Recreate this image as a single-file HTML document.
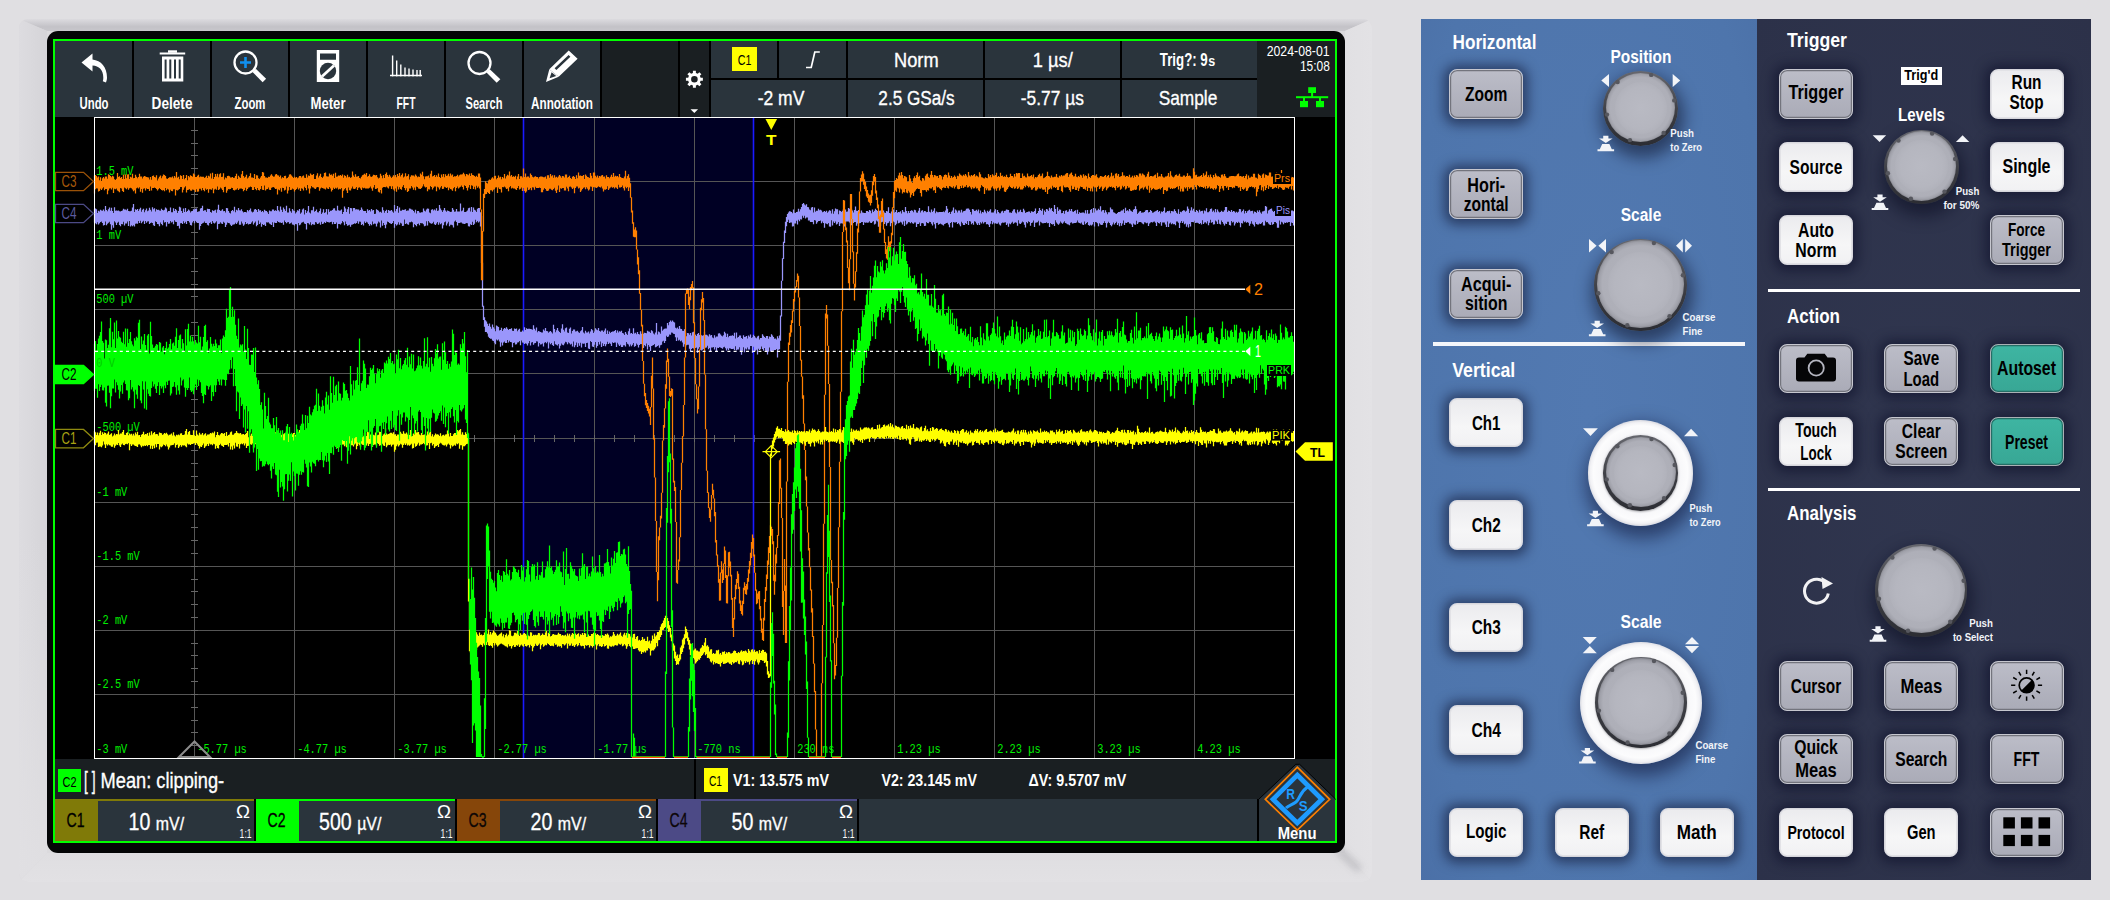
<!DOCTYPE html><html><head><meta charset="utf-8"><title>Oscilloscope</title><style>
html,body{margin:0;padding:0}
body{width:2110px;height:900px;overflow:hidden;background:#e0dfe2;position:relative;font-family:"Liberation Sans",sans-serif}
body>div{position:absolute}
svg{position:absolute;left:0;top:0}
.ls{font-family:"Liberation Sans",sans-serif}
.lm{font-family:"Liberation Mono",monospace}
#bezel{left:19px;top:19px;width:1353px;height:863px;border-radius:9px;background:#dbdadd}
#bz-top{left:19px;top:19px;width:1353px;height:12px;border-radius:9px 9px 0 0;background:linear-gradient(#dcdbdf,#c3c2c7 65%,#c8c7cc);clip-path:polygon(0 0,100% 0,calc(100% - 27px) 100%,28px 100%)}
#bz-left{left:19px;top:19px;width:28px;height:863px;border-radius:9px 0 0 9px;background:linear-gradient(to bottom,rgba(225,224,227,0) 60%,rgba(225,224,227,.85) 97%),linear-gradient(90deg,#dddce0,#d5d4d8);clip-path:polygon(0 0,100% 12px,100% calc(100% - 29px),0 100%)}
#bz-right{left:1345px;top:19px;width:27px;height:863px;border-radius:0 9px 9px 0;background:linear-gradient(90deg,#e1e0e3,#e3e2e5);clip-path:polygon(0 12px,100% 0,100% 100%,0 calc(100% - 29px))}
#bz-bot{left:19px;top:853px;width:1353px;height:29px;border-radius:0 0 9px 9px;background:linear-gradient(#dfdee1,#e2e1e4);clip-path:polygon(28px 0,calc(100% - 27px) 0,100% 100%,0 100%)}
#pblue{left:1421px;top:19px;width:336px;height:861px;background:radial-gradient(ellipse at 50% 45%,#5279b1,#4e75ac 80%,#4b70a7)}
#pnavy{left:1756.5px;top:19px;width:334.5px;height:861px;background:radial-gradient(ellipse at 50% 50%,#30364f,#2c3149)}
.b{width:72px;height:47.5px;border-radius:8px;border:1px solid #ccc;box-shadow:0 1px 12px 5px rgba(8,10,36,.5)}
.b.g{background:linear-gradient(#bcbdc8,#aaabb7);border-color:#c6c7cf;box-shadow:inset 0 0 0 1.2px #73747d,0 1px 12px 5px rgba(8,10,36,.5)}
.b.w{background:linear-gradient(#ebebee,#f6f6f7 60%,#f1f1f3);border-color:#d6d6dc;box-shadow:inset 0 0 0 1px #e2e2e6,0 1px 12px 5px rgba(8,10,36,.5)}
.b.t{background:linear-gradient(#3eb5a2,#38a795);border-color:#a9b0b4;box-shadow:inset 0 0 0 1.2px #246e66,0 1px 12px 5px rgba(8,10,36,.5)}
.knob{border-radius:50%;background:linear-gradient(#66676e,#3a3b41 60%,#2c2d33);box-shadow:2px 8px 16px 4px rgba(6,8,28,.5)}
.knob.kr{box-shadow:0 1px 2px rgba(0,0,0,.25)}
.kbody{border-radius:50%;background:radial-gradient(circle closest-side at 50% 50%,#b2b3bc 0,#aeafb8 88%,#a0a1aa 96%,#8d8e96 100%)}
.kin{border-radius:50%;background:radial-gradient(circle closest-side at 50% 50%,#b9bac3,#b5b6bf 80%,#b1b2bb)}
.ring{border-radius:50%;background:radial-gradient(circle closest-side at 50% 50%,#e6e6ea 0,#ebebef 72%,#f8f8fa 77%,#fcfcfd 90%,#f2f2f5 96%,#dedee4 100%);box-shadow:2px 8px 17px 4px rgba(6,8,40,.5)}
</style></head><body>
<div id="bezel"></div><div id="bz-top"></div><div id="bz-left"></div><div id="bz-right"></div><div id="bz-bot"></div>
<div style="left:1338px;top:846px;width:30px;height:7px;background:rgba(110,110,120,.28);filter:blur(3.5px);transform:rotate(43deg);transform-origin:0 50%"></div>
<div style="left:47px;top:31px;width:1298px;height:822px;background:#040506;border-radius:11px;"></div>
<div style="left:53px;top:39px;width:1284px;height:804px;background:#00ff00;"></div>
<div style="left:55px;top:41px;width:1280px;height:800px;background:#000;"></div>
<div style="left:55px;top:41px;width:1280px;height:76px;background:#1a1f22;"></div>
<div style="left:55px;top:41px;width:77px;height:76px;background:#2a343c;"></div>
<div style="left:132px;top:41px;width:2px;height:76px;background:#000;"></div>
<div style="left:134px;top:41px;width:76px;height:76px;background:#2a343c;"></div>
<div style="left:210px;top:41px;width:2px;height:76px;background:#000;"></div>
<div style="left:212px;top:41px;width:76px;height:76px;background:#2a343c;"></div>
<div style="left:288px;top:41px;width:2px;height:76px;background:#000;"></div>
<div style="left:290px;top:41px;width:76px;height:76px;background:#2a343c;"></div>
<div style="left:366px;top:41px;width:2px;height:76px;background:#000;"></div>
<div style="left:368px;top:41px;width:76px;height:76px;background:#2a343c;"></div>
<div style="left:444px;top:41px;width:2px;height:76px;background:#000;"></div>
<div style="left:446px;top:41px;width:76px;height:76px;background:#2a343c;"></div>
<div style="left:522px;top:41px;width:2px;height:76px;background:#000;"></div>
<div style="left:524px;top:41px;width:76px;height:76px;background:#2a343c;"></div>
<div style="left:600px;top:41px;width:2px;height:76px;background:#000;"></div>
<div style="left:678px;top:41px;width:2px;height:76px;background:#000;"></div>
<div style="left:709px;top:41px;width:2px;height:76px;background:#000;"></div>
<div style="left:711px;top:41px;width:66px;height:37px;background:#2a343c;"></div>
<div style="left:709px;top:41px;width:2px;height:76px;background:#000;"></div>
<div style="left:779px;top:41px;width:67px;height:37px;background:#2a343c;"></div>
<div style="left:777px;top:41px;width:2px;height:76px;background:#000;"></div>
<div style="left:848px;top:41px;width:135px;height:37px;background:#2a343c;"></div>
<div style="left:846px;top:41px;width:2px;height:76px;background:#000;"></div>
<div style="left:985px;top:41px;width:135px;height:37px;background:#2a343c;"></div>
<div style="left:983px;top:41px;width:2px;height:76px;background:#000;"></div>
<div style="left:1122px;top:41px;width:135px;height:37px;background:#2a343c;"></div>
<div style="left:1120px;top:41px;width:2px;height:76px;background:#000;"></div>
<div style="left:711px;top:78px;width:624px;height:2px;background:#000;"></div>
<div style="left:711px;top:80px;width:135px;height:37px;background:#2a343c;"></div>
<div style="left:848px;top:80px;width:135px;height:37px;background:#2a343c;"></div>
<div style="left:985px;top:80px;width:135px;height:37px;background:#2a343c;"></div>
<div style="left:1122px;top:80px;width:135px;height:37px;background:#2a343c;"></div>
<div style="left:1257px;top:41px;width:78px;height:76px;background:#1a1f22;"></div>
<div style="left:732px;top:47px;width:25px;height:24px;background:#ffff00;"></div>
<div style="left:55px;top:759px;width:1280px;height:40px;background:#1a1f22;"></div>
<div style="left:694px;top:759px;width:2px;height:40px;background:#000;"></div>
<div style="left:58px;top:769px;width:23px;height:23px;background:#00ff00;"></div>
<div style="left:703.5px;top:767.5px;width:24px;height:24px;background:#ffff00;"></div>
<div style="left:55px;top:799px;width:1280px;height:42px;background:#2a343c;"></div>
<div style="left:55px;top:799px;width:199px;height:2px;background:#807a08;"></div>
<div style="left:55px;top:799px;width:43px;height:42px;background:#807a08;"></div>
<div style="left:254px;top:799px;width:2px;height:42px;background:#000;"></div>
<div style="left:256px;top:799px;width:199px;height:2px;background:#00ff00;"></div>
<div style="left:256px;top:799px;width:43px;height:42px;background:#00ff00;"></div>
<div style="left:455px;top:799px;width:2px;height:42px;background:#000;"></div>
<div style="left:457px;top:799px;width:199px;height:2px;background:#86460a;"></div>
<div style="left:457px;top:799px;width:43px;height:42px;background:#86460a;"></div>
<div style="left:656px;top:799px;width:2px;height:42px;background:#000;"></div>
<div style="left:658px;top:799px;width:199px;height:2px;background:#4c4a86;"></div>
<div style="left:658px;top:799px;width:43px;height:42px;background:#4c4a86;"></div>
<div style="left:857px;top:799px;width:2px;height:42px;background:#000;"></div>
<div style="left:1257px;top:799px;width:2px;height:42px;background:#000;"></div>
<div id="pblue"></div><div id="pnavy"></div>
<div style="left:1768px;top:288.5px;width:312px;height:3.6px;background:#fff;"></div>
<div style="left:1768px;top:487.8px;width:312px;height:3.4px;background:#fff;"></div>
<div style="left:1432.6px;top:342px;width:312.4px;height:3.6px;background:#f4f6fa;"></div>
<div class="b g" style="left:1449.2px;top:69.3px"></div>
<div class="b g" style="left:1449.2px;top:169px"></div>
<div class="b g" style="left:1449.2px;top:269px"></div>
<div class="b w" style="left:1449.2px;top:397.5px"></div>
<div class="b w" style="left:1449.2px;top:500px"></div>
<div class="b w" style="left:1449.2px;top:602.5px"></div>
<div class="b w" style="left:1449.2px;top:705px"></div>
<div class="b w" style="left:1449.2px;top:807.5px"></div>
<div class="b w" style="left:1554.8px;top:807.5px"></div>
<div class="b w" style="left:1659.8px;top:807.5px"></div>
<div class="b g" style="left:1779px;top:69.3px"></div>
<div class="b w" style="left:1779px;top:142.3px"></div>
<div class="b w" style="left:1779px;top:215.3px"></div>
<div class="b w" style="left:1989.5px;top:69.3px"></div>
<div class="b w" style="left:1989.5px;top:142.3px"></div>
<div class="b g" style="left:1989.5px;top:215.3px"></div>
<div class="b g" style="left:1779px;top:343.5px"></div>
<div class="b g" style="left:1884.3px;top:343.5px"></div>
<div class="b t" style="left:1989.5px;top:343.5px"></div>
<div class="b w" style="left:1779px;top:416.5px"></div>
<div class="b g" style="left:1884.3px;top:416.5px"></div>
<div class="b t" style="left:1989.5px;top:416.5px"></div>
<div class="b g" style="left:1779px;top:661px"></div>
<div class="b g" style="left:1884.3px;top:661px"></div>
<div class="b g" style="left:1989.5px;top:661px"></div>
<div class="b g" style="left:1779px;top:734px"></div>
<div class="b g" style="left:1884.3px;top:734px"></div>
<div class="b g" style="left:1989.5px;top:734px"></div>
<div class="b w" style="left:1779px;top:807.5px"></div>
<div class="b w" style="left:1884.3px;top:807.5px"></div>
<div class="b g" style="left:1989.5px;top:807.5px"></div>
<div style="left:1900.7px;top:67.3px;width:41px;height:17.5px;background:#fff;"></div>
<div class="knob" style="left:1603.3px;top:71.0px;width:74.6px;height:74.6px"></div>
<div class="kbody" style="left:1605.9px;top:72.6px;width:69.4px;height:69.4px"></div>
<div class="kin" style="left:1614.5px;top:81.7px;width:52.2px;height:52.2px"></div>
<div class="knob" style="left:1594.3999999999999px;top:238.8px;width:92.4px;height:92.4px"></div>
<div class="kbody" style="left:1597.0px;top:240.4px;width:87.2px;height:87.2px"></div>
<div class="kin" style="left:1608.3px;top:252.2px;width:64.7px;height:64.7px"></div>
<div class="knob" style="left:1884.2px;top:129.60000000000002px;width:74.6px;height:74.6px"></div>
<div class="kbody" style="left:1886.8px;top:131.2px;width:69.4px;height:69.4px"></div>
<div class="kin" style="left:1895.4px;top:140.3px;width:52.2px;height:52.2px"></div>
<div class="knob" style="left:1875.1px;top:544.3px;width:92.4px;height:92.4px"></div>
<div class="kbody" style="left:1877.7px;top:545.9px;width:87.2px;height:87.2px"></div>
<div class="kin" style="left:1889.0px;top:557.7px;width:64.7px;height:64.7px"></div>
<div class="ring" style="left:1587.9px;top:420.2px;width:105.6px;height:105.6px"></div>
<div class="knob kr" style="left:1602.9px;top:435.2px;width:75.6px;height:75.6px"></div>
<div class="kbody" style="left:1605.5px;top:436.8px;width:70.4px;height:70.4px"></div>
<div class="kin" style="left:1614.2px;top:446.0px;width:52.9px;height:52.9px"></div>
<div class="ring" style="left:1579.8px;top:641.5px;width:122px;height:122px"></div>
<div class="knob kr" style="left:1595.0px;top:656.7px;width:91.6px;height:91.6px"></div>
<div class="kbody" style="left:1597.6px;top:658.3px;width:86.4px;height:86.4px"></div>
<div class="kin" style="left:1608.7px;top:669.9px;width:64.1px;height:64.1px"></div>
<svg width="2110" height="900" viewBox="0 0 2110 900">
<rect x="94" y="117" width="1201" height="642" fill="#000"/>
<rect x="523" y="118" width="231" height="640" fill="#000024"/>
<path d="M194.5 118V758M294.5 118V758M394.5 118V758M494.5 118V758M594.5 118V758M694.5 118V758M794.5 118V758M894.5 118V758M994.5 118V758M1094.5 118V758M1194.5 118V758M95 181.5H1294M95 245.5H1294M95 309.5H1294M95 373.5H1294M95 438.5H1294M95 502.5H1294M95 566.5H1294M95 630.5H1294M95 694.5H1294" stroke="#555" stroke-width="1" fill="none" shape-rendering="crispEdges"/>
<path d="M191 130.5h7M191 143.5h7M191 155.5h7M191 168.5h7M191 181.5h7M191 194.5h7M191 207.5h7M191 220.5h7M191 232.5h7M191 245.5h7M191 258.5h7M191 271.5h7M191 284.5h7M191 296.5h7M191 309.5h7M191 322.5h7M191 335.5h7M191 348.5h7M191 361.5h7M191 373.5h7M191 386.5h7M191 399.5h7M191 412.5h7M191 425.5h7M191 438.5h7M191 450.5h7M191 463.5h7M191 476.5h7M191 489.5h7M191 502.5h7M191 514.5h7M191 527.5h7M191 540.5h7M191 553.5h7M191 566.5h7M191 579.5h7M191 591.5h7M191 604.5h7M191 617.5h7M191 630.5h7M191 643.5h7M191 655.5h7M191 668.5h7M191 681.5h7M191 694.5h7M191 707.5h7M191 720.5h7M191 732.5h7M191 745.5h7M114.5 434.5v7M134.5 434.5v7M154.5 434.5v7M174.5 434.5v7M194.5 434.5v7M214.5 434.5v7M234.5 434.5v7M254.5 434.5v7M274.5 434.5v7M294.5 434.5v7M314.5 434.5v7M334.5 434.5v7M354.5 434.5v7M374.5 434.5v7M394.5 434.5v7M414.5 434.5v7M434.5 434.5v7M454.5 434.5v7M474.5 434.5v7M494.5 434.5v7M514.5 434.5v7M534.5 434.5v7M554.5 434.5v7M574.5 434.5v7M594.5 434.5v7M614.5 434.5v7M634.5 434.5v7M654.5 434.5v7M674.5 434.5v7M694.5 434.5v7M714.5 434.5v7M734.5 434.5v7M754.5 434.5v7M774.5 434.5v7M794.5 434.5v7M814.5 434.5v7M834.5 434.5v7M854.5 434.5v7M874.5 434.5v7M894.5 434.5v7M914.5 434.5v7M934.5 434.5v7M954.5 434.5v7M974.5 434.5v7M994.5 434.5v7M1014.5 434.5v7M1034.5 434.5v7M1054.5 434.5v7M1074.5 434.5v7M1094.5 434.5v7M1114.5 434.5v7M1134.5 434.5v7M1154.5 434.5v7M1174.5 434.5v7M1194.5 434.5v7M1214.5 434.5v7M1234.5 434.5v7M1254.5 434.5v7M1274.5 434.5v7" stroke="#666" stroke-width="1" fill="none" shape-rendering="crispEdges"/>
<path d="M523.5 118V758M753.5 118V758" stroke="#1a1aff" stroke-width="1.6" fill="none"/>
<text class="lm" transform="translate(96.3,175.0) scale(0.783,1)" font-size="13.2" fill="#00f000">1.5 mV</text>
<text class="lm" transform="translate(96.3,239.1) scale(0.783,1)" font-size="13.2" fill="#00f000">1 mV</text>
<text class="lm" transform="translate(96.3,303.2) scale(0.783,1)" font-size="13.2" fill="#00f000">500 µV</text>
<text class="lm" transform="translate(96.3,431.4) scale(0.783,1)" font-size="13.2" fill="#00f000">-500 µV</text>
<text class="lm" transform="translate(96.3,495.5) scale(0.783,1)" font-size="13.2" fill="#00f000">-1 mV</text>
<text class="lm" transform="translate(96.3,559.6) scale(0.783,1)" font-size="13.2" fill="#00f000">-1.5 mV</text>
<text class="lm" transform="translate(96.3,623.7) scale(0.783,1)" font-size="13.2" fill="#00f000">-2 mV</text>
<text class="lm" transform="translate(96.3,687.8) scale(0.783,1)" font-size="13.2" fill="#00f000">-2.5 mV</text>
<text class="lm" transform="translate(96.3,752.5) scale(0.783,1)" font-size="13.2" fill="#00f000">-3 mV</text>
<text class="lm" transform="translate(197.2,752.7) scale(0.783,1)" font-size="13.2" fill="#00f000">-5.77 µs</text>
<text class="lm" transform="translate(297.2,752.7) scale(0.783,1)" font-size="13.2" fill="#00f000">-4.77 µs</text>
<text class="lm" transform="translate(397.2,752.7) scale(0.783,1)" font-size="13.2" fill="#00f000">-3.77 µs</text>
<text class="lm" transform="translate(497.2,752.7) scale(0.783,1)" font-size="13.2" fill="#00f000">-2.77 µs</text>
<text class="lm" transform="translate(597.2,752.7) scale(0.783,1)" font-size="13.2" fill="#00f000">-1.77 µs</text>
<text class="lm" transform="translate(697.2,752.7) scale(0.783,1)" font-size="13.2" fill="#00f000">-770 ns</text>
<text class="lm" transform="translate(797.2,752.7) scale(0.783,1)" font-size="13.2" fill="#00f000">230 ns</text>
<text class="lm" transform="translate(897.2,752.7) scale(0.783,1)" font-size="13.2" fill="#00f000">1.23 µs</text>
<text class="lm" transform="translate(997.2,752.7) scale(0.783,1)" font-size="13.2" fill="#00f000">2.23 µs</text>
<text class="lm" transform="translate(1097.2,752.7) scale(0.783,1)" font-size="13.2" fill="#00f000">3.23 µs</text>
<text class="lm" transform="translate(1197.2,752.7) scale(0.783,1)" font-size="13.2" fill="#00f000">4.23 µs</text>
<path d="M94.5 209.2V222.4M95.5 208.6V223.2M96.5 209.3V224.2M97.5 212.9V222.3M98.5 210.7V224.4M99.5 211.4V223.2M100.5 209.7V222.1M101.5 210.5V221.5M102.5 210.7V223.0M103.5 209.5V225.6M104.5 211.3V224.9M105.5 206.1V221.5M106.5 210.0V225.3M107.5 211.3V223.7M108.5 209.3V222.7M109.5 207.4V221.8M110.5 210.8V224.2M111.5 207.8V229.7M112.5 210.9V225.3M113.5 212.9V227.8M114.5 207.2V221.3M115.5 210.7V222.4M116.5 210.5V224.9M117.5 210.8V222.7M118.5 210.6V221.8M119.5 211.2V224.9M120.5 211.6V226.3M121.5 211.0V224.0M122.5 210.5V224.3M123.5 208.7V221.7M124.5 209.6V225.5M125.5 209.6V223.5M126.5 210.2V223.5M127.5 208.8V221.4M128.5 211.1V226.1M129.5 211.3V221.1M130.5 211.2V226.4M131.5 210.7V225.3M132.5 207.6V226.2M133.5 204.1V225.3M134.5 212.0V226.5M135.5 209.2V223.7M136.5 210.1V223.5M137.5 209.1V223.8M138.5 210.9V220.9M139.5 209.3V223.0M140.5 207.8V220.7M141.5 211.7V223.3M142.5 209.8V221.7M143.5 208.7V220.8M144.5 212.3V223.9M145.5 210.2V220.9M146.5 208.4V222.8M147.5 211.3V221.6M148.5 210.4V221.2M149.5 207.7V224.0M150.5 209.8V222.9M151.5 211.6V222.4M152.5 207.3V222.9M153.5 209.3V225.3M154.5 208.2V226.0M155.5 211.4V221.3M156.5 209.2V222.0M157.5 210.0V224.1M158.5 209.7V224.2M159.5 210.5V226.3M160.5 210.7V222.5M161.5 208.7V223.9M162.5 210.1V225.2M163.5 210.5V220.2M164.5 209.8V222.6M165.5 207.5V222.1M166.5 208.5V226.4M167.5 212.2V222.0M168.5 211.1V223.8M169.5 211.1V223.5M170.5 207.4V221.0M171.5 212.3V222.4M172.5 212.2V221.8M173.5 208.2V224.2M174.5 211.1V220.3M175.5 209.1V221.7M176.5 210.2V222.1M177.5 213.1V225.9M178.5 210.9V225.7M179.5 206.8V228.4M180.5 207.5V223.3M181.5 211.0V222.9M182.5 213.0V223.9M183.5 208.4V221.2M184.5 212.0V223.2M185.5 208.0V221.8M186.5 212.0V224.0M187.5 211.1V221.0M188.5 209.5V221.0M189.5 210.4V222.5M190.5 212.4V225.0M191.5 211.2V225.4M192.5 210.9V222.4M193.5 209.3V221.1M194.5 209.5V223.3M195.5 208.8V220.7M196.5 208.5V222.2M197.5 212.1V223.1M198.5 211.6V222.9M199.5 211.2V229.8M200.5 208.5V226.0M201.5 207.9V224.1M202.5 205.7V223.2M203.5 211.1V222.8M204.5 210.2V221.4M205.5 210.2V223.1M206.5 211.9V222.9M207.5 208.8V224.8M208.5 209.1V225.4M209.5 209.0V222.9M210.5 212.0V222.2M211.5 212.7V223.9M212.5 210.2V221.0M213.5 211.1V222.7M214.5 210.6V223.6M215.5 209.7V222.5M216.5 212.8V221.3M217.5 209.5V229.3M218.5 204.7V223.9M219.5 209.9V223.7M220.5 210.9V222.2M221.5 210.4V223.6M222.5 209.2V224.1M223.5 211.3V221.7M224.5 210.9V222.7M225.5 212.6V226.9M226.5 207.9V224.8M227.5 208.3V222.5M228.5 210.9V223.1M229.5 212.7V223.3M230.5 213.4V224.7M231.5 211.0V226.1M232.5 210.1V224.8M233.5 211.2V224.6M234.5 206.7V224.2M235.5 212.3V222.7M236.5 209.8V223.9M237.5 210.6V222.6M238.5 208.0V220.7M239.5 210.2V224.8M240.5 210.6V224.8M241.5 209.2V221.6M242.5 211.3V223.4M243.5 212.4V225.7M244.5 211.9V224.4M245.5 212.0V221.9M246.5 212.5V224.0M247.5 209.9V223.3M248.5 211.2V224.5M249.5 210.1V224.1M250.5 208.5V224.0M251.5 211.5V222.4M252.5 212.6V221.2M253.5 211.7V224.4M254.5 209.4V222.8M255.5 209.1V221.6M256.5 210.0V226.2M257.5 212.0V225.1M258.5 208.9V220.6M259.5 210.5V223.9M260.5 210.2V222.5M261.5 212.0V226.7M262.5 211.1V223.9M263.5 212.3V225.1M264.5 209.8V224.4M265.5 210.7V226.1M266.5 211.0V222.2M267.5 212.3V222.5M268.5 213.9V222.2M269.5 210.6V223.4M270.5 211.2V224.2M271.5 211.2V224.9M272.5 209.5V222.3M273.5 209.6V226.9M274.5 211.1V222.6M275.5 210.2V223.1M276.5 211.0V222.9M277.5 206.1V221.1M278.5 210.2V222.1M279.5 211.5V222.4M280.5 206.5V222.5M281.5 209.7V222.9M282.5 212.0V222.4M283.5 207.4V224.8M284.5 209.2V220.6M285.5 211.1V222.0M286.5 205.7V223.3M287.5 212.5V222.2M288.5 212.6V221.9M289.5 208.2V223.7M290.5 211.3V223.3M291.5 212.8V222.5M292.5 208.9V224.4M293.5 210.4V224.7M294.5 211.1V225.5M295.5 213.6V224.0M296.5 212.2V224.3M297.5 210.2V230.8M298.5 210.7V223.1M299.5 209.0V225.2M300.5 213.7V224.4M301.5 212.5V222.8M302.5 209.6V222.3M303.5 208.6V221.8M304.5 214.5V223.5M305.5 209.9V224.0M306.5 212.9V229.4M307.5 211.3V222.9M308.5 206.1V223.3M309.5 212.6V224.5M310.5 213.5V222.2M311.5 210.3V225.2M312.5 210.3V224.0M313.5 206.7V224.4M314.5 211.7V224.8M315.5 210.9V222.1M316.5 209.5V222.4M317.5 212.3V224.0M318.5 212.6V223.4M319.5 211.0V222.5M320.5 208.5V224.8M321.5 213.9V221.7M322.5 212.5V224.0M323.5 209.2V223.6M324.5 213.1V221.9M325.5 212.2V223.1M326.5 209.1V221.4M327.5 214.5V222.1M328.5 209.3V222.3M329.5 211.9V222.6M330.5 210.7V222.1M331.5 210.7V221.8M332.5 209.9V224.3M333.5 208.5V222.1M334.5 208.2V223.9M335.5 210.6V224.0M336.5 210.8V222.6M337.5 205.7V228.5M338.5 210.3V224.0M339.5 210.8V223.9M340.5 210.6V224.5M341.5 209.5V223.2M342.5 214.1V220.9M343.5 212.1V222.2M344.5 206.4V225.2M345.5 208.5V221.4M346.5 211.9V223.9M347.5 209.2V225.8M348.5 207.1V225.3M349.5 213.8V224.8M350.5 208.1V226.7M351.5 208.2V224.8M352.5 211.2V224.4M353.5 208.1V224.1M354.5 208.1V223.2M355.5 209.6V223.8M356.5 209.2V222.9M357.5 209.4V221.2M358.5 209.6V223.8M359.5 210.8V221.4M360.5 210.0V221.8M361.5 207.4V224.9M362.5 209.6V224.1M363.5 210.9V225.4M364.5 211.1V221.5M365.5 211.1V222.9M366.5 213.0V221.8M367.5 209.2V222.5M368.5 210.8V224.1M369.5 209.9V225.7M370.5 211.4V224.1M371.5 208.9V225.2M372.5 210.4V221.6M373.5 210.1V224.2M374.5 213.9V223.6M375.5 213.8V223.8M376.5 209.2V226.4M377.5 210.1V223.4M378.5 210.8V221.5M379.5 212.3V222.6M380.5 211.7V227.6M381.5 212.7V220.6M382.5 207.3V225.8M383.5 210.3V222.9M384.5 212.8V225.0M385.5 211.0V228.2M386.5 209.7V224.4M387.5 212.9V221.6M388.5 210.1V222.1M389.5 210.8V223.0M390.5 210.7V223.4M391.5 209.9V224.0M392.5 211.6V223.1M393.5 212.8V220.9M394.5 204.9V227.7M395.5 211.2V224.1M396.5 209.0V225.5M397.5 206.1V224.6M398.5 212.7V222.3M399.5 207.4V224.8M400.5 210.7V222.7M401.5 210.8V223.5M402.5 209.8V226.0M403.5 210.0V225.8M404.5 209.8V219.4M405.5 209.3V223.9M406.5 211.0V223.3M407.5 210.6V224.3M408.5 210.4V224.8M409.5 208.4V222.2M410.5 208.7V222.2M411.5 209.5V221.6M412.5 209.8V222.3M413.5 211.1V227.3M414.5 212.5V223.9M415.5 209.7V225.0M416.5 213.6V226.3M417.5 211.0V224.0M418.5 210.9V223.6M419.5 212.6V225.3M420.5 212.7V223.0M421.5 212.3V223.3M422.5 212.3V223.3M423.5 208.4V224.2M424.5 210.8V226.2M425.5 211.5V225.8M426.5 209.6V221.3M427.5 208.6V225.5M428.5 208.8V220.9M429.5 212.4V222.4M430.5 213.3V223.2M431.5 209.8V223.8M432.5 209.2V223.3M433.5 210.6V221.7M434.5 209.4V224.2M435.5 210.5V225.1M436.5 208.2V223.6M437.5 211.0V222.0M438.5 210.6V224.7M439.5 205.0V222.4M440.5 208.6V224.3M441.5 210.2V223.3M442.5 212.1V228.6M443.5 210.3V225.2M444.5 207.9V222.3M445.5 210.6V221.6M446.5 211.8V225.4M447.5 210.4V223.6M448.5 210.9V221.8M449.5 211.6V226.2M450.5 211.9V224.8M451.5 211.8V224.8M452.5 207.9V225.2M453.5 209.7V227.5M454.5 211.8V221.6M455.5 211.5V220.6M456.5 208.9V222.1M457.5 211.5V225.4M458.5 211.6V223.0M459.5 211.4V223.0M460.5 203.6V222.4M461.5 211.3V222.4M462.5 210.6V223.6M463.5 207.7V223.8M464.5 212.0V223.9M465.5 211.9V223.5M466.5 211.4V223.1M467.5 210.5V223.2M468.5 208.2V226.3M469.5 207.7V226.5M470.5 211.5V224.2M471.5 206.9V225.1M472.5 211.9V221.8M473.5 207.6V225.0M474.5 209.8V223.7M475.5 210.6V219.8M476.5 212.0V222.2M477.5 208.7V220.9M478.5 208.1V222.4M479.5 207.9V221.5M480.5 212.2V226.5M481.5 215.9V263.1M482.5 262.8V306.8M483.5 305.7V319.9M484.5 317.2V326.7M485.5 320.3V332.0M486.5 321.5V332.0M487.5 323.8V333.4M488.5 326.0V336.7M489.5 323.6V337.9M490.5 326.7V338.8M491.5 328.8V338.8M492.5 324.6V340.5M493.5 327.3V340.9M494.5 328.8V342.8M495.5 331.2V344.3M496.5 325.6V339.6M497.5 326.2V340.6M498.5 327.1V339.5M499.5 330.5V341.4M500.5 329.9V346.7M501.5 327.7V342.5M502.5 331.0V345.6M503.5 329.2V342.6M504.5 328.0V341.4M505.5 328.7V343.1M506.5 327.2V343.1M507.5 328.7V340.1M508.5 330.0V342.5M509.5 329.1V340.8M510.5 329.1V342.1M511.5 328.2V342.2M512.5 330.8V347.3M513.5 330.9V343.1M514.5 328.4V342.6M515.5 329.1V344.4M516.5 328.5V344.2M517.5 331.3V342.4M518.5 329.8V342.3M519.5 328.7V340.9M520.5 331.7V345.2M521.5 331.7V340.4M522.5 330.6V342.6M523.5 331.5V342.8M524.5 327.3V344.0M525.5 330.1V343.3M526.5 328.3V343.7M527.5 328.9V345.6M528.5 328.8V343.2M529.5 328.8V341.1M530.5 329.1V345.4M531.5 329.2V342.5M532.5 329.8V341.9M533.5 325.2V344.8M534.5 328.8V343.3M535.5 330.5V343.0M536.5 327.6V341.2M537.5 332.3V341.6M538.5 331.0V346.4M539.5 331.5V343.0M540.5 331.9V344.4M541.5 332.6V344.3M542.5 332.4V343.6M543.5 329.6V346.5M544.5 330.8V342.7M545.5 328.1V342.0M546.5 331.1V343.3M547.5 331.3V341.7M548.5 332.8V348.5M549.5 331.7V342.4M550.5 331.0V344.3M551.5 332.3V342.9M552.5 333.6V345.1M553.5 324.8V346.1M554.5 329.0V341.2M555.5 332.3V344.3M556.5 330.3V344.8M557.5 327.9V345.5M558.5 330.8V344.0M559.5 331.9V348.4M560.5 332.9V345.8M561.5 328.4V343.5M562.5 324.2V344.7M563.5 329.8V345.3M564.5 331.5V343.6M565.5 328.3V341.7M566.5 327.6V342.2M567.5 332.4V344.2M568.5 333.0V342.2M569.5 328.7V343.2M570.5 327.5V344.6M571.5 333.5V343.7M572.5 330.9V346.5M573.5 329.5V341.6M574.5 329.4V347.2M575.5 331.6V345.2M576.5 331.2V342.5M577.5 330.8V346.9M578.5 332.2V343.3M579.5 333.1V345.7M580.5 331.2V342.8M581.5 330.2V347.5M582.5 327.0V343.5M583.5 332.5V343.8M584.5 333.5V343.4M585.5 330.8V347.1M586.5 332.6V343.1M587.5 332.4V342.8M588.5 331.5V348.5M589.5 333.6V349.0M590.5 331.5V340.9M591.5 329.0V341.9M592.5 330.3V346.6M593.5 332.9V347.0M594.5 331.5V344.8M595.5 328.2V342.0M596.5 329.6V347.8M597.5 330.3V345.9M598.5 328.0V342.0M599.5 331.0V344.6M600.5 331.8V341.6M601.5 330.4V347.0M602.5 330.4V343.3M603.5 331.9V346.0M604.5 330.4V344.1M605.5 328.4V346.2M606.5 333.9V344.3M607.5 330.4V341.7M608.5 333.9V343.9M609.5 331.4V342.8M610.5 333.0V343.8M611.5 332.0V346.0M612.5 331.5V342.3M613.5 331.5V343.1M614.5 331.1V342.4M615.5 330.0V342.5M616.5 332.7V346.9M617.5 330.5V342.8M618.5 332.5V344.5M619.5 331.3V346.0M620.5 331.8V344.8M621.5 330.8V347.1M622.5 333.0V347.0M623.5 333.4V345.3M624.5 334.9V345.3M625.5 332.0V346.4M626.5 333.7V342.1M627.5 335.1V343.8M628.5 331.2V344.4M629.5 328.6V346.5M630.5 333.5V344.5M631.5 332.9V346.3M632.5 333.9V344.7M633.5 328.2V343.1M634.5 333.4V346.7M635.5 332.8V346.1M636.5 334.2V343.4M637.5 332.1V344.7M638.5 333.9V347.4M639.5 334.5V344.9M640.5 331.3V344.1M641.5 333.8V344.0M642.5 331.6V345.5M643.5 333.8V347.9M644.5 332.7V344.9M645.5 332.9V346.2M646.5 333.3V343.4M647.5 330.7V349.5M648.5 331.6V345.1M649.5 331.7V346.7M650.5 333.1V351.1M651.5 330.2V345.9M652.5 331.3V345.6M653.5 333.5V344.9M654.5 334.4V344.1M655.5 332.4V347.3M656.5 322.9V346.8M657.5 334.4V345.9M658.5 331.4V345.2M659.5 332.3V347.8M660.5 333.7V345.2M661.5 326.6V344.8M662.5 330.7V341.4M663.5 329.4V340.7M664.5 328.7V342.9M665.5 328.5V341.0M666.5 328.4V335.7M667.5 323.0V337.0M668.5 325.2V336.5M669.5 322.1V334.5M670.5 320.6V334.7M671.5 321.8V332.6M672.5 320.6V332.8M673.5 321.7V333.7M674.5 322.4V334.1M675.5 327.8V337.2M676.5 328.6V341.0M677.5 327.5V337.6M678.5 329.1V340.6M679.5 326.1V339.8M680.5 328.8V341.3M681.5 329.0V340.5M682.5 330.8V342.5M683.5 331.0V346.8M684.5 329.3V344.2M685.5 331.7V346.8M686.5 336.3V345.2M687.5 333.1V344.8M688.5 333.2V344.8M689.5 334.7V348.7M690.5 333.0V351.2M691.5 335.5V349.0M692.5 332.2V348.0M693.5 331.8V348.6M694.5 333.7V352.7M695.5 334.8V347.9M696.5 336.1V347.6M697.5 333.9V353.1M698.5 333.1V348.7M699.5 334.9V347.1M700.5 334.5V349.8M701.5 335.3V350.5M702.5 335.7V349.8M703.5 335.2V349.1M704.5 331.7V348.2M705.5 334.8V347.7M706.5 334.8V347.4M707.5 335.5V345.8M708.5 336.6V349.2M709.5 334.3V348.1M710.5 335.4V351.5M711.5 335.0V347.6M712.5 337.4V347.5M713.5 338.3V347.1M714.5 335.3V349.5M715.5 337.4V347.3M716.5 336.6V351.1M717.5 336.6V347.8M718.5 333.4V348.0M719.5 333.2V346.9M720.5 334.4V347.6M721.5 335.7V348.0M722.5 336.5V348.8M723.5 335.2V347.3M724.5 331.8V346.7M725.5 333.3V348.2M726.5 337.0V350.6M727.5 333.7V348.6M728.5 337.3V350.1M729.5 336.0V348.2M730.5 335.7V348.4M731.5 335.7V349.0M732.5 335.3V349.0M733.5 335.9V348.7M734.5 332.8V349.9M735.5 338.4V346.2M736.5 332.4V350.2M737.5 337.8V349.4M738.5 337.1V349.5M739.5 335.4V347.2M740.5 335.6V352.0M741.5 338.0V354.7M742.5 339.0V350.7M743.5 335.3V347.2M744.5 337.1V352.3M745.5 336.8V348.5M746.5 335.9V349.4M747.5 338.4V347.5M748.5 335.4V349.4M749.5 336.7V349.6M750.5 334.5V346.0M751.5 337.9V345.9M752.5 337.2V353.1M753.5 334.8V346.7M754.5 336.0V351.6M755.5 337.4V350.7M756.5 338.2V349.8M757.5 336.5V354.6M758.5 335.8V348.8M759.5 339.4V349.9M760.5 338.1V349.3M761.5 338.1V346.6M762.5 334.3V348.9M763.5 335.8V350.8M764.5 336.9V348.0M765.5 338.0V350.7M766.5 336.1V351.3M767.5 335.9V354.6M768.5 338.8V351.8M769.5 336.5V347.4M770.5 336.9V351.4M771.5 334.2V351.9M772.5 335.6V350.8M773.5 336.9V350.8M774.5 338.7V349.9M775.5 338.6V350.0M776.5 339.4V349.1M777.5 336.2V357.6M778.5 338.3V349.8M779.5 335.4V349.2M780.5 315.6V340.7M781.5 280.8V316.5M782.5 258.2V280.8M783.5 241.8V258.9M784.5 230.6V243.1M785.5 221.7V232.9M786.5 217.1V226.3M787.5 214.0V222.0M788.5 212.4V219.7M789.5 211.3V223.1M790.5 211.4V222.5M791.5 212.1V222.5M792.5 213.2V226.4M793.5 209.6V226.2M794.5 212.8V223.6M795.5 213.0V223.4M796.5 211.9V220.7M797.5 211.7V224.4M798.5 208.7V219.7M799.5 211.6V221.3M800.5 209.2V219.2M801.5 207.1V219.6M802.5 204.1V215.8M803.5 203.1V217.8M804.5 204.5V215.8M805.5 205.6V218.6M806.5 204.2V217.5M807.5 206.9V217.6M808.5 207.3V220.4M809.5 209.6V220.5M810.5 210.2V222.0M811.5 207.5V222.0M812.5 207.0V222.0M813.5 212.6V224.2M814.5 207.6V220.0M815.5 211.8V220.5M816.5 210.8V223.8M817.5 210.8V222.3M818.5 208.8V220.9M819.5 210.3V221.0M820.5 209.7V220.4M821.5 210.6V223.2M822.5 212.3V221.6M823.5 211.8V223.1M824.5 210.9V227.7M825.5 211.9V223.2M826.5 210.7V223.8M827.5 212.7V224.3M828.5 211.5V222.9M829.5 210.3V226.6M830.5 210.8V226.8M831.5 213.4V220.3M832.5 209.3V225.4M833.5 213.8V221.5M834.5 211.2V223.1M835.5 208.6V221.5M836.5 209.3V224.5M837.5 209.3V223.8M838.5 214.3V222.0M839.5 210.6V226.0M840.5 211.0V223.6M841.5 211.9V223.3M842.5 210.8V223.5M843.5 209.0V223.7M844.5 212.2V226.6M845.5 209.5V222.7M846.5 211.8V221.5M847.5 211.6V221.4M848.5 207.9V221.6M849.5 208.8V222.5M850.5 212.7V224.6M851.5 209.1V225.3M852.5 210.5V222.2M853.5 212.6V222.9M854.5 209.9V222.1M855.5 206.4V222.1M856.5 210.7V225.8M857.5 211.1V223.6M858.5 209.9V226.1M859.5 211.6V223.3M860.5 213.2V222.9M861.5 210.6V222.0M862.5 212.6V222.1M863.5 212.8V225.0M864.5 213.1V222.2M865.5 213.1V222.7M866.5 210.9V222.6M867.5 211.0V222.7M868.5 211.9V222.6M869.5 210.0V221.2M870.5 210.7V222.8M871.5 213.2V223.1M872.5 209.4V221.8M873.5 212.1V220.9M874.5 210.7V224.4M875.5 208.7V223.7M876.5 209.9V220.4M877.5 211.0V221.5M878.5 211.3V226.8M879.5 210.8V224.9M880.5 210.5V225.9M881.5 213.2V222.3M882.5 211.9V221.8M883.5 210.4V222.1M884.5 212.5V224.0M885.5 212.9V222.3M886.5 210.9V225.7M887.5 211.6V223.3M888.5 207.2V222.7M889.5 213.0V221.2M890.5 213.5V226.2M891.5 211.5V223.1M892.5 209.1V223.7M893.5 209.6V221.5M894.5 212.8V222.3M895.5 212.0V225.3M896.5 210.1V223.8M897.5 212.7V220.6M898.5 212.1V223.2M899.5 212.2V222.7M900.5 211.2V221.8M901.5 213.5V222.5M902.5 210.1V224.4M903.5 211.7V221.6M904.5 212.2V226.1M905.5 207.1V220.7M906.5 210.9V224.6M907.5 213.2V223.6M908.5 211.1V222.0M909.5 213.1V222.3M910.5 211.0V223.3M911.5 210.3V222.0M912.5 210.8V223.3M913.5 212.3V223.7M914.5 209.8V222.6M915.5 210.2V222.4M916.5 212.6V227.1M917.5 212.8V224.0M918.5 210.8V224.1M919.5 208.0V222.4M920.5 212.5V226.1M921.5 210.8V223.2M922.5 210.3V222.9M923.5 212.3V223.5M924.5 211.0V226.1M925.5 211.3V225.8M926.5 212.3V222.0M927.5 212.0V222.9M928.5 206.2V223.2M929.5 211.7V221.7M930.5 212.5V222.0M931.5 209.6V223.7M932.5 211.9V225.4M933.5 210.7V222.2M934.5 208.3V224.2M935.5 213.2V228.5M936.5 211.4V223.1M937.5 212.3V222.7M938.5 212.3V224.7M939.5 212.1V224.0M940.5 212.1V223.5M941.5 211.9V224.3M942.5 211.9V224.8M943.5 211.6V225.5M944.5 212.3V223.9M945.5 210.4V223.4M946.5 206.0V222.9M947.5 208.8V222.8M948.5 213.0V224.4M949.5 211.9V227.2M950.5 214.0V223.0M951.5 211.7V221.9M952.5 210.6V227.5M953.5 207.4V222.1M954.5 213.0V222.6M955.5 209.6V222.4M956.5 210.4V221.9M957.5 212.4V224.1M958.5 210.6V222.9M959.5 210.5V224.6M960.5 212.4V226.3M961.5 209.7V221.8M962.5 212.5V223.2M963.5 211.3V225.1M964.5 210.9V225.1M965.5 210.6V223.1M966.5 208.8V224.1M967.5 208.4V221.0M968.5 208.5V224.9M969.5 209.8V221.1M970.5 212.1V221.4M971.5 214.4V224.2M972.5 209.0V222.9M973.5 209.4V224.7M974.5 211.1V221.3M975.5 210.7V221.8M976.5 209.8V223.4M977.5 211.2V225.0M978.5 209.6V223.2M979.5 213.3V225.1M980.5 210.6V222.3M981.5 213.5V223.6M982.5 212.0V221.7M983.5 212.4V223.6M984.5 209.8V222.2M985.5 211.6V222.0M986.5 213.2V224.2M987.5 210.7V223.9M988.5 211.9V224.7M989.5 210.8V227.1M990.5 209.2V223.7M991.5 212.5V221.0M992.5 212.4V224.3M993.5 212.4V222.6M994.5 210.7V223.6M995.5 209.3V223.2M996.5 213.5V223.8M997.5 210.0V223.8M998.5 212.1V222.4M999.5 213.2V224.5M1000.5 213.2V225.4M1001.5 211.4V223.2M1002.5 210.7V222.5M1003.5 212.7V222.8M1004.5 210.9V222.4M1005.5 210.7V222.2M1006.5 209.4V224.9M1007.5 209.8V223.6M1008.5 210.1V226.8M1009.5 212.4V223.5M1010.5 212.4V224.2M1011.5 212.9V222.7M1012.5 211.2V221.8M1013.5 209.4V223.7M1014.5 209.2V222.7M1015.5 212.4V222.3M1016.5 213.6V222.8M1017.5 209.8V225.8M1018.5 212.2V220.3M1019.5 211.5V223.5M1020.5 209.7V224.0M1021.5 212.1V222.7M1022.5 212.3V221.5M1023.5 208.8V222.3M1024.5 210.4V224.8M1025.5 212.9V227.4M1026.5 212.2V221.9M1027.5 212.1V223.2M1028.5 211.6V221.3M1029.5 211.6V221.9M1030.5 212.9V225.8M1031.5 211.2V223.0M1032.5 211.7V222.5M1033.5 212.0V220.5M1034.5 211.1V227.0M1035.5 208.5V222.7M1036.5 214.1V222.6M1037.5 213.0V222.2M1038.5 210.9V220.8M1039.5 208.0V225.5M1040.5 210.0V221.8M1041.5 211.0V222.5M1042.5 208.8V223.2M1043.5 214.7V223.3M1044.5 210.4V223.0M1045.5 212.1V222.9M1046.5 209.0V222.3M1047.5 209.6V223.3M1048.5 210.9V222.9M1049.5 207.8V227.1M1050.5 209.3V223.0M1051.5 208.0V223.9M1052.5 211.1V224.5M1053.5 211.9V224.0M1054.5 204.9V226.0M1055.5 208.9V220.2M1056.5 214.1V222.4M1057.5 207.3V223.8M1058.5 211.1V224.8M1059.5 209.6V223.6M1060.5 209.7V221.6M1061.5 213.2V222.8M1062.5 213.0V223.7M1063.5 210.9V222.6M1064.5 213.8V221.2M1065.5 210.8V223.0M1066.5 210.2V223.6M1067.5 212.0V224.3M1068.5 211.6V224.5M1069.5 209.3V225.3M1070.5 211.1V222.8M1071.5 208.9V222.3M1072.5 211.4V223.5M1073.5 211.9V223.2M1074.5 211.0V222.9M1075.5 210.2V222.9M1076.5 213.4V222.5M1077.5 209.7V220.6M1078.5 213.9V222.5M1079.5 212.3V223.0M1080.5 213.1V223.4M1081.5 212.8V222.6M1082.5 212.6V224.6M1083.5 212.4V225.1M1084.5 213.2V221.4M1085.5 210.3V224.2M1086.5 213.6V222.9M1087.5 210.0V222.1M1088.5 213.7V225.0M1089.5 213.4V225.8M1090.5 210.1V224.8M1091.5 208.9V225.5M1092.5 212.8V224.6M1093.5 207.9V222.0M1094.5 212.4V226.4M1095.5 208.4V222.1M1096.5 210.4V222.2M1097.5 210.2V223.2M1098.5 208.7V226.3M1099.5 210.0V223.3M1100.5 206.2V224.4M1101.5 211.6V224.9M1102.5 210.2V224.7M1103.5 210.1V223.0M1104.5 212.7V221.3M1105.5 210.3V222.9M1106.5 212.3V227.4M1107.5 214.2V223.3M1108.5 212.3V221.7M1109.5 212.3V222.9M1110.5 207.5V225.0M1111.5 209.2V226.3M1112.5 209.5V224.6M1113.5 212.3V222.5M1114.5 212.7V224.5M1115.5 213.6V222.9M1116.5 213.9V221.7M1117.5 213.1V225.0M1118.5 211.9V223.3M1119.5 212.0V226.2M1120.5 211.6V222.9M1121.5 210.5V225.8M1122.5 210.4V223.6M1123.5 209.2V220.6M1124.5 213.1V224.9M1125.5 207.7V222.8M1126.5 211.1V223.0M1127.5 210.3V222.2M1128.5 211.3V222.0M1129.5 209.0V223.5M1130.5 210.5V223.4M1131.5 211.2V224.5M1132.5 212.0V227.1M1133.5 209.7V223.4M1134.5 209.0V224.6M1135.5 206.3V224.7M1136.5 209.3V220.7M1137.5 214.0V223.9M1138.5 212.8V222.4M1139.5 211.4V222.0M1140.5 211.0V221.9M1141.5 212.8V222.4M1142.5 212.5V223.4M1143.5 212.4V224.3M1144.5 212.1V222.3M1145.5 210.5V222.4M1146.5 210.1V223.2M1147.5 210.1V222.8M1148.5 212.5V226.0M1149.5 212.0V223.4M1150.5 209.9V222.4M1151.5 211.1V222.0M1152.5 212.7V222.4M1153.5 212.6V221.8M1154.5 211.7V221.5M1155.5 211.2V222.8M1156.5 210.7V226.0M1157.5 209.9V222.1M1158.5 212.1V222.9M1159.5 210.9V223.4M1160.5 213.5V221.9M1161.5 211.4V225.8M1162.5 212.0V222.6M1163.5 210.9V222.4M1164.5 207.6V222.6M1165.5 212.8V224.6M1166.5 212.3V226.9M1167.5 211.1V221.5M1168.5 211.2V227.0M1169.5 210.7V223.6M1170.5 213.3V222.5M1171.5 211.1V224.3M1172.5 211.3V223.2M1173.5 211.6V224.3M1174.5 209.2V224.0M1175.5 211.1V225.3M1176.5 212.8V221.6M1177.5 213.8V221.4M1178.5 209.3V222.7M1179.5 213.9V228.1M1180.5 211.8V222.8M1181.5 212.3V221.1M1182.5 211.0V223.0M1183.5 210.2V221.4M1184.5 210.5V224.2M1185.5 211.7V223.5M1186.5 210.7V226.8M1187.5 206.5V224.5M1188.5 208.7V227.6M1189.5 213.1V224.1M1190.5 210.6V226.6M1191.5 207.3V222.0M1192.5 210.4V222.1M1193.5 208.8V222.3M1194.5 211.6V220.7M1195.5 212.0V223.1M1196.5 209.9V222.7M1197.5 210.9V222.7M1198.5 212.6V223.3M1199.5 209.7V224.0M1200.5 211.5V223.1M1201.5 210.9V224.4M1202.5 210.8V220.2M1203.5 213.5V224.1M1204.5 210.6V222.6M1205.5 211.2V222.3M1206.5 208.2V223.6M1207.5 212.2V221.3M1208.5 212.3V225.3M1209.5 211.2V222.7M1210.5 209.0V219.7M1211.5 208.6V222.7M1212.5 211.8V222.1M1213.5 210.6V224.6M1214.5 212.3V224.2M1215.5 208.9V220.4M1216.5 212.3V221.6M1217.5 209.4V223.9M1218.5 211.4V219.8M1219.5 212.5V223.7M1220.5 212.1V224.5M1221.5 210.8V220.6M1222.5 211.7V221.9M1223.5 211.7V223.8M1224.5 210.2V225.5M1225.5 206.9V223.5M1226.5 206.9V224.0M1227.5 212.0V221.7M1228.5 210.6V221.7M1229.5 211.1V225.1M1230.5 212.1V225.4M1231.5 210.0V220.9M1232.5 212.1V222.5M1233.5 211.1V221.8M1234.5 211.6V225.6M1235.5 212.8V223.6M1236.5 211.8V222.0M1237.5 212.8V222.9M1238.5 211.8V221.7M1239.5 208.9V222.7M1240.5 209.3V227.2M1241.5 212.2V223.1M1242.5 210.9V223.6M1243.5 209.4V220.8M1244.5 213.4V222.2M1245.5 210.9V221.4M1246.5 212.9V222.8M1247.5 211.2V221.9M1248.5 210.5V222.7M1249.5 209.7V225.7M1250.5 211.2V223.7M1251.5 211.0V221.2M1252.5 210.8V223.7M1253.5 213.4V224.7M1254.5 211.5V226.5M1255.5 212.1V222.3M1256.5 213.0V223.9M1257.5 210.5V224.5M1258.5 211.9V224.5M1259.5 210.2V223.6M1260.5 212.6V223.9M1261.5 213.8V223.2M1262.5 211.5V222.0M1263.5 211.3V225.5M1264.5 210.8V225.6M1265.5 206.0V220.8M1266.5 206.7V222.2M1267.5 213.4V222.1M1268.5 210.5V223.5M1269.5 209.7V224.5M1270.5 208.9V224.9M1271.5 208.6V222.3M1272.5 210.7V224.8M1273.5 212.0V223.9M1274.5 211.1V222.0M1275.5 211.0V221.9M1276.5 210.8V223.3M1277.5 211.2V227.8M1278.5 210.7V227.8M1279.5 210.8V220.5M1280.5 211.5V224.4M1281.5 211.3V221.7M1282.5 209.6V222.6M1283.5 211.4V224.3M1284.5 211.7V222.4M1285.5 211.2V223.0M1286.5 210.0V222.2M1287.5 209.7V222.8M1288.5 212.4V221.9M1289.5 209.9V221.9M1290.5 211.1V226.0M1291.5 210.5V222.4M1292.5 210.6V223.1M1293.5 211.2V225.4" stroke="#9a96fb" stroke-width="1.25" fill="none"/>
<path d="M94.5 175.8V193.5M95.5 175.0V189.3M96.5 176.0V188.3M97.5 177.6V188.5M98.5 176.6V191.6M99.5 180.2V190.9M100.5 177.2V188.8M101.5 180.9V190.0M102.5 178.2V188.6M103.5 177.0V187.3M104.5 178.6V190.3M105.5 176.4V189.1M106.5 176.4V189.0M107.5 178.7V194.3M108.5 174.3V190.5M109.5 174.9V188.6M110.5 176.0V188.2M111.5 177.3V189.5M112.5 175.8V187.8M113.5 176.6V193.0M114.5 179.2V188.7M115.5 179.9V189.2M116.5 178.8V188.6M117.5 172.9V190.5M118.5 176.9V191.3M119.5 176.2V192.3M120.5 178.1V187.9M121.5 177.1V188.4M122.5 179.1V191.1M123.5 174.7V191.9M124.5 178.9V187.4M125.5 174.6V188.3M126.5 178.2V189.3M127.5 174.4V187.7M128.5 174.2V189.8M129.5 179.0V188.2M130.5 176.7V187.8M131.5 177.5V188.3M132.5 173.7V189.6M133.5 178.3V191.3M134.5 177.9V190.2M135.5 174.7V193.4M136.5 176.7V188.3M137.5 178.2V187.4M138.5 176.9V188.4M139.5 173.7V187.3M140.5 176.5V191.8M141.5 176.4V189.1M142.5 178.6V192.8M143.5 176.7V188.8M144.5 175.9V188.3M145.5 176.4V190.5M146.5 177.1V188.2M147.5 177.2V188.9M148.5 177.6V189.1M149.5 179.4V191.1M150.5 176.9V186.4M151.5 179.8V190.6M152.5 176.0V188.1M153.5 175.6V188.1M154.5 177.0V187.5M155.5 177.5V188.1M156.5 175.3V189.1M157.5 180.4V190.5M158.5 178.6V189.2M159.5 176.8V188.0M160.5 175.6V189.1M161.5 178.2V189.9M162.5 176.3V190.4M163.5 174.6V190.1M164.5 174.9V191.2M165.5 175.9V188.0M166.5 178.4V190.2M167.5 178.9V188.8M168.5 178.0V189.6M169.5 177.3V192.5M170.5 177.2V189.8M171.5 177.4V191.0M172.5 176.5V191.3M173.5 178.2V189.2M174.5 176.1V189.2M175.5 177.6V195.4M176.5 172.1V190.0M177.5 177.8V190.4M178.5 176.8V189.7M179.5 179.3V188.9M180.5 175.2V187.0M181.5 176.0V187.1M182.5 178.9V192.5M183.5 175.0V189.7M184.5 179.2V187.4M185.5 177.9V186.3M186.5 175.1V192.5M187.5 180.2V190.0M188.5 175.9V189.7M189.5 177.3V189.1M190.5 175.3V190.4M191.5 176.1V190.7M192.5 176.8V189.4M193.5 173.5V189.8M194.5 174.5V190.2M195.5 176.9V191.9M196.5 177.1V189.2M197.5 175.8V191.7M198.5 174.7V191.5M199.5 177.3V188.7M200.5 176.5V188.8M201.5 176.8V190.5M202.5 176.8V188.0M203.5 176.8V189.9M204.5 177.9V191.3M205.5 177.3V188.6M206.5 175.8V189.8M207.5 177.9V188.9M208.5 175.7V192.8M209.5 176.4V189.3M210.5 173.4V189.3M211.5 178.5V189.8M212.5 172.7V188.2M213.5 179.1V193.2M214.5 176.9V189.4M215.5 173.9V188.7M216.5 176.6V189.8M217.5 173.7V186.6M218.5 177.2V190.1M219.5 174.2V189.2M220.5 173.2V187.5M221.5 176.9V188.4M222.5 176.8V189.9M223.5 173.2V192.3M224.5 179.4V187.1M225.5 177.6V186.8M226.5 178.3V192.7M227.5 176.1V190.4M228.5 175.7V188.9M229.5 176.3V189.3M230.5 177.6V189.0M231.5 177.6V187.7M232.5 176.9V187.9M233.5 178.1V189.9M234.5 177.8V190.6M235.5 175.9V189.7M236.5 173.8V189.4M237.5 179.1V188.2M238.5 175.8V190.1M239.5 177.3V188.8M240.5 178.0V188.6M241.5 174.3V188.5M242.5 171.0V189.0M243.5 176.1V191.2M244.5 177.8V189.9M245.5 176.7V187.7M246.5 174.8V190.8M247.5 178.6V189.0M248.5 177.6V187.6M249.5 176.1V187.3M250.5 173.3V186.5M251.5 177.4V187.1M252.5 177.6V190.0M253.5 178.1V190.1M254.5 174.0V186.9M255.5 179.0V189.0M256.5 175.3V190.3M257.5 175.6V187.9M258.5 178.2V189.9M259.5 179.1V190.6M260.5 177.6V188.9M261.5 175.9V186.1M262.5 171.9V189.8M263.5 172.6V190.0M264.5 176.0V185.6M265.5 177.4V190.5M266.5 177.5V189.2M267.5 178.1V189.0M268.5 176.7V187.6M269.5 177.1V189.7M270.5 175.4V190.0M271.5 174.2V187.8M272.5 175.8V187.2M273.5 176.7V186.9M274.5 176.5V187.8M275.5 174.6V188.9M276.5 174.1V188.8M277.5 175.3V194.4M278.5 175.5V189.5M279.5 177.0V190.2M280.5 175.5V188.3M281.5 178.4V191.8M282.5 177.2V187.8M283.5 178.1V187.9M284.5 176.1V190.5M285.5 175.8V189.7M286.5 178.6V186.5M287.5 177.9V193.4M288.5 176.8V190.4M289.5 174.4V187.1M290.5 174.2V189.9M291.5 175.4V189.8M292.5 176.7V188.6M293.5 178.1V189.3M294.5 176.7V191.5M295.5 177.7V190.1M296.5 177.0V188.9M297.5 178.2V187.6M298.5 177.5V189.5M299.5 176.0V188.3M300.5 176.0V191.0M301.5 177.4V188.3M302.5 176.3V188.8M303.5 175.6V190.5M304.5 177.7V186.8M305.5 177.9V188.1M306.5 174.2V190.2M307.5 177.5V185.0M308.5 175.4V188.5M309.5 175.9V193.4M310.5 173.6V188.6M311.5 174.7V186.0M312.5 175.1V187.3M313.5 174.1V187.4M314.5 179.1V188.4M315.5 179.0V189.1M316.5 175.5V187.5M317.5 173.2V186.9M318.5 177.6V187.2M319.5 175.8V190.7M320.5 173.7V188.5M321.5 176.9V187.6M322.5 178.1V187.9M323.5 176.6V188.4M324.5 172.9V188.8M325.5 172.6V189.5M326.5 176.2V187.6M327.5 176.6V188.4M328.5 176.6V188.9M329.5 173.6V186.9M330.5 175.1V188.6M331.5 174.6V191.5M332.5 175.7V189.9M333.5 173.8V187.7M334.5 177.9V189.0M335.5 172.8V187.8M336.5 176.7V188.6M337.5 176.6V187.5M338.5 175.5V189.4M339.5 175.8V188.7M340.5 175.0V189.3M341.5 176.1V188.0M342.5 174.4V197.8M343.5 177.8V190.8M344.5 175.2V189.2M345.5 175.9V187.9M346.5 177.4V190.6M347.5 174.7V193.1M348.5 177.3V187.6M349.5 176.7V190.3M350.5 178.0V190.5M351.5 177.2V188.5M352.5 171.5V186.6M353.5 175.4V188.7M354.5 177.1V189.0M355.5 174.3V188.5M356.5 176.8V187.1M357.5 176.5V189.9M358.5 176.0V187.8M359.5 178.0V187.3M360.5 178.5V188.5M361.5 176.8V190.1M362.5 175.3V187.5M363.5 174.7V188.3M364.5 173.7V187.8M365.5 174.7V188.4M366.5 173.0V188.4M367.5 176.7V188.6M368.5 176.1V188.6M369.5 174.2V187.7M370.5 176.6V186.6M371.5 177.1V188.6M372.5 176.3V190.8M373.5 174.8V187.5M374.5 175.0V185.1M375.5 175.4V189.0M376.5 175.1V188.8M377.5 177.3V187.9M378.5 178.5V191.7M379.5 177.8V192.4M380.5 173.8V189.9M381.5 175.8V193.6M382.5 178.2V187.7M383.5 175.0V186.9M384.5 178.0V186.9M385.5 174.1V187.2M386.5 172.5V186.5M387.5 175.0V187.5M388.5 176.8V188.5M389.5 174.8V186.2M390.5 176.4V186.3M391.5 178.0V189.0M392.5 176.8V186.3M393.5 175.3V189.4M394.5 176.4V190.7M395.5 174.9V188.4M396.5 177.2V191.8M397.5 174.0V186.5M398.5 176.0V189.5M399.5 173.0V187.3M400.5 176.4V188.9M401.5 175.0V189.7M402.5 173.5V186.8M403.5 177.5V185.0M404.5 176.4V188.1M405.5 173.3V190.3M406.5 176.5V188.3M407.5 175.9V191.9M408.5 174.2V191.0M409.5 179.4V188.4M410.5 176.8V188.5M411.5 175.2V185.9M412.5 175.6V187.6M413.5 175.6V189.7M414.5 176.6V187.6M415.5 174.4V190.3M416.5 175.7V186.4M417.5 177.2V187.0M418.5 176.5V188.6M419.5 177.1V188.7M420.5 173.6V189.1M421.5 174.8V188.1M422.5 171.8V186.4M423.5 176.2V184.2M424.5 179.3V186.5M425.5 176.4V187.5M426.5 176.3V187.1M427.5 176.3V191.2M428.5 175.6V189.2M429.5 177.8V189.5M430.5 173.7V186.1M431.5 170.8V187.0M432.5 176.4V189.4M433.5 175.9V187.8M434.5 175.1V186.4M435.5 177.1V186.6M436.5 175.2V191.2M437.5 176.7V186.8M438.5 173.6V187.4M439.5 177.0V189.5M440.5 178.1V187.5M441.5 174.4V186.0M442.5 176.8V189.0M443.5 173.9V188.7M444.5 177.3V186.7M445.5 174.2V187.2M446.5 175.9V188.0M447.5 175.6V187.3M448.5 173.7V190.2M449.5 176.3V187.8M450.5 173.5V189.0M451.5 175.5V189.6M452.5 174.4V190.7M453.5 176.9V188.3M454.5 176.3V187.0M455.5 176.5V191.2M456.5 176.0V187.9M457.5 174.8V186.5M458.5 176.4V188.4M459.5 175.2V187.6M460.5 174.6V186.8M461.5 174.5V185.5M462.5 174.3V187.0M463.5 172.8V189.4M464.5 174.2V185.3M465.5 176.2V185.9M466.5 173.9V188.0M467.5 174.6V190.6M468.5 175.3V187.5M469.5 173.6V184.9M470.5 176.0V189.1M471.5 173.2V185.2M472.5 175.0V185.8M473.5 175.3V189.1M474.5 176.1V186.7M475.5 176.9V189.4M476.5 175.7V185.8M477.5 177.1V187.7M478.5 173.6V186.5M479.5 173.4V188.4M480.5 177.5V209.5M481.5 209.5V280.3M482.5 231.1V280.3M483.5 193.8V231.5M484.5 189.0V198.0M485.5 181.3V194.2M486.5 182.7V194.1M487.5 183.4V192.0M488.5 180.4V193.0M489.5 179.4V193.9M490.5 179.9V190.2M491.5 178.6V190.2M492.5 177.2V191.5M493.5 178.4V189.7M494.5 176.0V189.0M495.5 175.8V187.4M496.5 179.3V187.2M497.5 177.9V192.9M498.5 175.6V187.5M499.5 177.6V188.9M500.5 176.7V189.2M501.5 179.2V192.6M502.5 176.9V187.0M503.5 178.3V187.3M504.5 174.1V186.6M505.5 178.5V187.6M506.5 176.3V188.9M507.5 174.7V188.6M508.5 175.6V191.2M509.5 171.5V187.2M510.5 176.2V186.1M511.5 175.1V188.6M512.5 177.0V187.7M513.5 176.3V188.4M514.5 177.0V188.4M515.5 175.8V189.2M516.5 179.3V190.0M517.5 176.5V187.9M518.5 174.1V185.9M519.5 179.0V189.5M520.5 176.3V188.7M521.5 176.2V187.5M522.5 177.5V191.0M523.5 168.4V187.9M524.5 177.1V191.0M525.5 173.5V192.7M526.5 177.2V191.4M527.5 176.6V187.4M528.5 176.6V190.1M529.5 177.8V189.4M530.5 173.6V188.1M531.5 174.9V190.3M532.5 176.7V187.2M533.5 177.5V187.4M534.5 176.8V189.7M535.5 176.3V186.8M536.5 176.9V188.0M537.5 176.9V188.0M538.5 178.4V187.9M539.5 177.0V187.4M540.5 176.5V188.1M541.5 176.4V192.3M542.5 176.8V192.3M543.5 177.3V189.7M544.5 177.2V187.9M545.5 176.6V189.1M546.5 178.8V190.7M547.5 175.3V191.1M548.5 175.2V190.4M549.5 177.8V188.7M550.5 174.0V188.8M551.5 176.3V189.7M552.5 175.3V190.3M553.5 177.7V188.9M554.5 175.2V187.8M555.5 177.5V190.8M556.5 176.8V192.9M557.5 177.7V189.8M558.5 176.5V185.6M559.5 175.1V192.1M560.5 176.3V188.2M561.5 177.7V188.7M562.5 176.1V187.9M563.5 176.3V187.9M564.5 177.6V190.4M565.5 174.6V190.4M566.5 174.6V186.8M567.5 177.8V188.4M568.5 176.9V191.3M569.5 175.7V186.7M570.5 177.9V186.6M571.5 179.1V187.5M572.5 176.8V189.0M573.5 175.9V187.8M574.5 177.1V193.2M575.5 179.1V188.0M576.5 175.2V186.4M577.5 178.3V186.4M578.5 172.5V188.4M579.5 175.8V187.8M580.5 175.5V191.9M581.5 176.1V190.6M582.5 175.9V189.1M583.5 175.0V187.8M584.5 179.0V187.2M585.5 174.6V189.3M586.5 175.8V187.2M587.5 176.9V188.7M588.5 177.3V190.6M589.5 178.0V189.6M590.5 172.9V186.4M591.5 175.8V186.7M592.5 178.2V191.1M593.5 172.6V187.3M594.5 172.6V187.0M595.5 175.7V187.5M596.5 177.3V188.0M597.5 175.5V187.2M598.5 177.7V186.2M599.5 176.1V187.1M600.5 176.5V187.4M601.5 175.4V186.6M602.5 175.0V188.4M603.5 176.7V191.4M604.5 176.4V189.6M605.5 178.4V189.8M606.5 175.2V189.1M607.5 177.1V186.3M608.5 176.9V190.1M609.5 178.3V188.5M610.5 176.7V187.4M611.5 174.7V186.8M612.5 177.1V187.7M613.5 173.0V187.1M614.5 176.8V188.4M615.5 175.8V187.3M616.5 176.5V187.8M617.5 175.9V188.9M618.5 177.2V184.7M619.5 174.0V187.4M620.5 177.0V187.5M621.5 177.8V186.9M622.5 177.9V185.5M623.5 178.2V188.3M624.5 176.4V190.6M625.5 170.7V186.8M626.5 178.5V188.3M627.5 176.1V187.1M628.5 174.2V190.9M629.5 177.7V187.6M630.5 183.3V197.8M631.5 197.2V212.4M632.5 210.4V223.8M633.5 222.2V236.8M634.5 229.6V237.2M635.5 227.3V237.2M636.5 230.5V249.5M637.5 249.5V264.5M638.5 257.3V274.3M639.5 270.2V293.8M640.5 293.0V309.9M641.5 309.9V326.6M642.5 324.7V361.1M643.5 361.1V383.8M644.5 383.8V396.2M645.5 393.0V405.3M646.5 400.0V408.0M647.5 403.1V410.9M648.5 405.7V413.6M649.5 408.7V416.4M650.5 406.9V425.1M651.5 375.8V407.3M652.5 357.4V388.4M653.5 388.4V439.4M654.5 438.0V477.6M655.5 477.6V521.0M656.5 521.0V571.9M657.5 571.9V601.2M658.5 536.3V580.2M659.5 527.6V540.2M660.5 515.7V527.6M661.5 492.7V518.5M662.5 440.6V492.7M663.5 425.0V440.6M664.5 408.3V427.7M665.5 384.2V408.5M666.5 360.4V388.7M667.5 348.5V361.9M668.5 358.7V376.7M669.5 376.4V395.9M670.5 390.9V396.9M671.5 388.3V395.7M672.5 389.0V459.7M673.5 458.5V482.4M674.5 480.8V491.1M675.5 486.9V521.9M676.5 521.9V582.8M677.5 569.9V583.8M678.5 559.5V570.0M679.5 537.2V561.5M680.5 490.0V537.2M681.5 462.7V490.0M682.5 435.9V462.7M683.5 404.9V436.5M684.5 357.5V404.9M685.5 293.6V357.5M686.5 289.6V293.9M687.5 288.6V293.8M688.5 289.0V305.0M689.5 296.7V309.3M690.5 287.0V300.3M691.5 284.1V290.2M692.5 281.1V288.0M693.5 287.3V323.3M694.5 322.2V358.3M695.5 357.9V384.2M696.5 384.2V399.3M697.5 398.7V413.4M698.5 386.5V409.2M699.5 349.5V386.5M700.5 307.8V349.5M701.5 299.2V310.3M702.5 292.1V302.6M703.5 298.1V320.5M704.5 319.9V374.5M705.5 374.5V429.3M706.5 429.3V470.8M707.5 470.8V492.9M708.5 492.3V508.0M709.5 507.4V518.0M710.5 509.5V521.7M711.5 495.0V509.7M712.5 483.8V495.0M713.5 489.8V498.5M714.5 498.4V516.3M715.5 512.0V542.6M716.5 540.0V555.6M717.5 554.6V566.7M718.5 565.2V582.8M719.5 578.9V600.8M720.5 572.6V600.5M721.5 561.2V573.3M722.5 569.5V582.9M723.5 563.5V580.1M724.5 546.5V564.1M725.5 550.6V578.1M726.5 574.9V603.2M727.5 575.4V603.5M728.5 552.2V576.2M729.5 551.8V567.4M730.5 561.5V576.5M731.5 574.8V599.7M732.5 598.1V628.1M733.5 618.1V637.1M734.5 597.1V619.6M735.5 584.8V599.2M736.5 579.0V589.3M737.5 571.2V583.1M738.5 573.7V589.0M739.5 586.7V603.6M740.5 600.5V610.9M741.5 605.2V614.1M742.5 600.7V615.6M743.5 587.8V604.1M744.5 582.2V590.3M745.5 586.0V594.1M746.5 584.0V594.8M747.5 577.9V589.5M748.5 569.4V581.8M749.5 561.0V573.5M750.5 552.7V565.4M751.5 541.9V558.1M752.5 534.6V548.8M753.5 537.9V556.4M754.5 554.4V572.8M755.5 572.8V590.8M756.5 589.4V604.3M757.5 593.5V603.3M758.5 591.6V599.2M759.5 591.1V609.2M760.5 606.0V620.6M761.5 618.6V632.8M762.5 628.7V639.9M763.5 617.8V641.0M764.5 598.9V620.5M765.5 587.0V602.0M766.5 574.6V590.8M767.5 560.6V579.1M768.5 547.3V564.8M769.5 536.1V552.9M770.5 525.3V539.1M771.5 526.7V535.7M772.5 528.9V544.3M773.5 541.3V580.7M774.5 574.8V594.8M775.5 554.5V581.4M776.5 547.4V563.4M777.5 535.0V547.9M778.5 501.9V535.7M779.5 460.3V504.1M780.5 458.5V488.5M781.5 487.7V518.1M782.5 518.1V606.9M783.5 591.1V635.1M784.5 558.9V591.1M785.5 585.6V642.9M786.5 481.6V642.9M787.5 381.8V481.6M788.5 342.6V381.8M789.5 332.8V345.0M790.5 325.0V336.7M791.5 320.2V332.4M792.5 310.6V322.9M793.5 299.1V311.6M794.5 290.8V301.4M795.5 286.4V292.6M796.5 280.1V287.1M797.5 273.6V281.4M798.5 275.7V297.4M799.5 297.4V326.0M800.5 326.0V360.5M801.5 359.7V376.7M802.5 376.6V398.8M803.5 395.2V423.8M804.5 423.4V449.9M805.5 449.9V480.3M806.5 476.6V506.6M807.5 506.6V532.4M808.5 532.4V550.6M809.5 548.0V567.3M810.5 567.3V590.4M811.5 589.6V612.4M812.5 608.3V636.9M813.5 636.0V663.7M814.5 663.4V692.3M815.5 691.1V729.4M816.5 729.4V757.0M817.5 756.2V757.8M818.5 756.2V757.8M819.5 756.2V757.8M820.5 756.2V757.8M821.5 683.2V757.0M822.5 624.9V683.2M823.5 523.8V624.9M824.5 394.8V523.8M825.5 313.5V394.8M826.5 305.1V318.6M827.5 314.6V345.8M828.5 345.8V384.0M829.5 384.0V467.0M830.5 467.0V559.9M831.5 559.9V583.3M832.5 581.8V606.6M833.5 604.9V643.3M834.5 643.3V679.3M835.5 664.9V675.4M836.5 637.8V666.0M837.5 588.1V637.8M838.5 527.3V588.1M839.5 461.7V527.3M840.5 391.8V461.7M841.5 311.2V391.8M842.5 232.0V311.2M843.5 200.1V232.0M844.5 200.6V224.3M845.5 221.4V230.3M846.5 227.6V242.4M847.5 240.6V268.1M848.5 267.6V283.2M849.5 259.2V290.3M850.5 193.9V259.2M851.5 193.9V218.9M852.5 218.9V252.3M853.5 251.5V283.7M854.5 283.7V300.4M855.5 271.3V287.4M856.5 252.3V271.7M857.5 228.4V253.8M858.5 211.6V232.6M859.5 191.5V213.6M860.5 178.1V191.5M861.5 174.5V181.6M862.5 171.3V181.0M863.5 173.5V184.7M864.5 179.3V189.1M865.5 181.7V191.2M866.5 186.6V196.5M867.5 190.1V198.0M868.5 193.5V201.7M869.5 195.2V202.7M870.5 194.8V205.4M871.5 190.2V202.9M872.5 181.5V195.7M873.5 176.1V185.3M874.5 173.9V181.6M875.5 177.1V193.5M876.5 190.6V199.9M877.5 197.6V208.3M878.5 204.5V219.1M879.5 216.2V232.7M880.5 214.4V232.7M881.5 200.9V217.2M882.5 198.4V217.0M883.5 212.4V229.4M884.5 228.8V242.9M885.5 241.9V253.9M886.5 249.3V258.6M887.5 246.2V259.7M888.5 236.3V248.2M889.5 241.7V251.2M890.5 241.3V250.7M891.5 232.8V243.6M892.5 207.3V235.2M893.5 192.1V208.2M894.5 180.9V198.3M895.5 180.0V190.6M896.5 178.1V191.8M897.5 178.9V187.8M898.5 175.5V188.5M899.5 172.7V192.5M900.5 175.4V188.5M901.5 171.9V189.4M902.5 175.0V193.5M903.5 178.2V191.9M904.5 176.1V192.4M905.5 176.6V189.0M906.5 177.3V192.6M907.5 181.8V193.3M908.5 181.5V190.8M909.5 175.1V192.5M910.5 178.6V197.6M911.5 182.1V194.8M912.5 182.7V193.1M913.5 178.3V196.1M914.5 176.3V191.7M915.5 178.1V190.4M916.5 175.1V189.1M917.5 172.4V188.3M918.5 177.1V189.0M919.5 175.8V189.1M920.5 180.2V193.1M921.5 181.6V196.5M922.5 177.9V190.1M923.5 178.6V190.3M924.5 180.5V190.0M925.5 175.8V190.3M926.5 174.2V191.8M927.5 173.5V190.1M928.5 177.0V190.5M929.5 178.1V188.0M930.5 174.7V188.4M931.5 170.9V188.5M932.5 175.0V187.1M933.5 177.3V190.5M934.5 175.0V190.1M935.5 175.6V193.0M936.5 176.2V186.3M937.5 176.0V187.6M938.5 178.1V187.1M939.5 174.9V188.3M940.5 174.9V189.1M941.5 176.2V190.3M942.5 179.4V188.1M943.5 176.8V187.2M944.5 175.0V187.8M945.5 174.4V187.9M946.5 174.9V186.1M947.5 177.6V187.7M948.5 172.4V188.6M949.5 175.5V185.9M950.5 178.1V186.5M951.5 176.0V187.2M952.5 177.7V187.7M953.5 177.1V186.3M954.5 175.6V188.5M955.5 176.8V186.8M956.5 179.1V185.3M957.5 175.8V188.7M958.5 176.3V189.2M959.5 173.6V189.1M960.5 174.8V186.0M961.5 175.4V188.1M962.5 176.2V185.4M963.5 174.7V187.9M964.5 175.7V186.7M965.5 174.1V186.8M966.5 175.4V185.1M967.5 177.3V187.4M968.5 172.0V187.2M969.5 175.5V186.1M970.5 176.4V187.6M971.5 175.1V189.2M972.5 176.1V187.2M973.5 175.1V188.6M974.5 174.0V188.2M975.5 176.4V186.8M976.5 175.4V188.4M977.5 176.3V188.2M978.5 177.2V190.3M979.5 172.2V191.3M980.5 174.2V187.7M981.5 177.3V184.9M982.5 177.6V186.3M983.5 178.2V186.9M984.5 178.4V194.0M985.5 177.3V188.3M986.5 177.9V190.2M987.5 178.3V188.4M988.5 174.0V190.4M989.5 176.6V190.6M990.5 175.1V190.2M991.5 177.2V187.4M992.5 174.3V186.3M993.5 175.4V188.6M994.5 176.1V189.6M995.5 174.9V188.6M996.5 172.8V190.8M997.5 177.1V188.2M998.5 175.9V187.5M999.5 177.0V190.4M1000.5 172.7V188.7M1001.5 175.9V185.6M1002.5 175.5V187.8M1003.5 177.0V187.6M1004.5 176.2V191.4M1005.5 177.1V192.0M1006.5 174.7V190.3M1007.5 176.9V189.1M1008.5 177.8V187.2M1009.5 177.1V185.8M1010.5 173.7V187.1M1011.5 175.9V188.0M1012.5 175.9V188.3M1013.5 177.5V186.8M1014.5 174.1V188.7M1015.5 176.5V188.2M1016.5 173.1V186.5M1017.5 173.6V189.0M1018.5 172.9V188.3M1019.5 172.9V186.8M1020.5 178.0V189.6M1021.5 178.0V189.4M1022.5 173.5V189.4M1023.5 176.2V188.2M1024.5 175.7V186.0M1025.5 177.2V187.2M1026.5 177.6V185.3M1027.5 173.4V185.9M1028.5 176.2V187.5M1029.5 176.5V186.6M1030.5 176.1V187.5M1031.5 175.1V189.7M1032.5 176.7V189.5M1033.5 174.6V188.0M1034.5 178.4V187.0M1035.5 177.0V190.4M1036.5 177.6V190.4M1037.5 176.8V189.2M1038.5 175.0V187.2M1039.5 173.8V188.5M1040.5 176.2V188.8M1041.5 175.7V187.7M1042.5 173.5V189.4M1043.5 178.2V189.7M1044.5 177.8V189.4M1045.5 176.9V192.0M1046.5 176.1V187.0M1047.5 171.7V193.9M1048.5 175.9V189.7M1049.5 176.6V188.9M1050.5 177.7V187.8M1051.5 175.5V189.2M1052.5 177.2V185.8M1053.5 177.2V187.6M1054.5 176.7V187.0M1055.5 176.7V188.1M1056.5 174.0V186.9M1057.5 177.3V190.0M1058.5 177.7V190.1M1059.5 175.8V186.7M1060.5 176.6V186.3M1061.5 175.1V191.1M1062.5 176.2V192.3M1063.5 175.5V185.6M1064.5 175.5V187.3M1065.5 174.3V187.5M1066.5 173.2V187.3M1067.5 173.1V186.9M1068.5 177.1V187.7M1069.5 174.5V190.0M1070.5 173.6V191.7M1071.5 172.5V185.8M1072.5 174.9V189.3M1073.5 176.5V189.0M1074.5 176.3V186.7M1075.5 173.8V189.9M1076.5 176.7V190.1M1077.5 177.3V187.8M1078.5 176.1V191.1M1079.5 177.1V188.6M1080.5 174.8V186.4M1081.5 175.4V187.0M1082.5 177.7V187.3M1083.5 174.2V189.0M1084.5 176.3V188.8M1085.5 175.3V189.8M1086.5 176.0V186.8M1087.5 178.6V190.9M1088.5 173.4V187.7M1089.5 177.1V188.1M1090.5 178.1V191.3M1091.5 176.1V188.5M1092.5 175.1V191.6M1093.5 174.9V186.6M1094.5 175.8V187.4M1095.5 175.5V187.5M1096.5 174.2V191.6M1097.5 177.3V186.9M1098.5 178.2V185.7M1099.5 177.6V188.9M1100.5 176.0V187.4M1101.5 176.2V186.5M1102.5 176.7V190.9M1103.5 177.1V189.3M1104.5 176.0V187.8M1105.5 174.9V186.8M1106.5 177.3V190.3M1107.5 176.1V188.4M1108.5 174.9V187.4M1109.5 177.8V186.4M1110.5 176.4V187.1M1111.5 172.8V186.5M1112.5 176.2V187.8M1113.5 175.5V187.1M1114.5 178.3V188.0M1115.5 173.7V190.2M1116.5 173.3V185.9M1117.5 175.8V187.7M1118.5 174.1V187.2M1119.5 177.0V186.4M1120.5 176.6V189.7M1121.5 176.1V188.8M1122.5 172.2V185.7M1123.5 175.4V187.3M1124.5 175.4V186.1M1125.5 177.1V189.5M1126.5 175.9V188.5M1127.5 175.9V186.1M1128.5 176.9V187.8M1129.5 174.7V187.6M1130.5 177.5V190.7M1131.5 177.3V191.1M1132.5 175.8V190.2M1133.5 177.8V190.2M1134.5 175.6V189.4M1135.5 177.1V189.9M1136.5 174.9V189.6M1137.5 175.6V186.0M1138.5 176.7V184.9M1139.5 173.6V190.4M1140.5 173.5V188.7M1141.5 175.6V188.3M1142.5 173.4V187.5M1143.5 174.6V189.4M1144.5 175.3V187.4M1145.5 177.3V186.5M1146.5 176.5V188.7M1147.5 173.7V189.8M1148.5 171.8V185.8M1149.5 177.0V192.7M1150.5 176.0V187.8M1151.5 176.0V190.2M1152.5 176.5V189.0M1153.5 176.3V188.0M1154.5 175.2V189.3M1155.5 174.6V189.8M1156.5 177.9V189.8M1157.5 172.7V189.6M1158.5 176.8V189.1M1159.5 176.3V188.5M1160.5 176.4V189.6M1161.5 174.0V187.9M1162.5 176.6V186.9M1163.5 177.5V194.0M1164.5 177.5V190.1M1165.5 176.6V189.9M1166.5 176.5V191.3M1167.5 175.7V190.8M1168.5 173.0V187.6M1169.5 176.7V187.4M1170.5 171.3V188.9M1171.5 175.6V188.0M1172.5 176.7V189.0M1173.5 177.4V188.2M1174.5 176.5V188.6M1175.5 175.1V187.9M1176.5 174.6V186.9M1177.5 175.9V186.6M1178.5 175.6V189.4M1179.5 173.7V186.0M1180.5 176.4V191.6M1181.5 176.7V188.7M1182.5 176.8V191.5M1183.5 175.5V191.4M1184.5 175.5V187.3M1185.5 177.0V188.6M1186.5 175.9V187.2M1187.5 173.2V190.8M1188.5 175.9V187.1M1189.5 175.4V188.8M1190.5 176.3V187.6M1191.5 178.5V187.3M1192.5 178.5V189.8M1193.5 168.2V189.2M1194.5 171.8V185.1M1195.5 175.3V187.1M1196.5 174.8V189.5M1197.5 177.1V184.9M1198.5 176.5V186.1M1199.5 176.5V187.2M1200.5 176.1V186.6M1201.5 175.1V187.0M1202.5 177.1V187.0M1203.5 173.2V188.0M1204.5 175.7V186.7M1205.5 174.8V188.7M1206.5 171.4V186.0M1207.5 176.9V188.6M1208.5 175.2V187.8M1209.5 177.2V186.5M1210.5 174.5V188.8M1211.5 177.1V188.1M1212.5 178.3V188.7M1213.5 174.9V189.8M1214.5 177.1V188.1M1215.5 173.6V189.6M1216.5 175.4V188.5M1217.5 176.4V184.9M1218.5 176.2V185.9M1219.5 177.1V192.1M1220.5 177.7V188.7M1221.5 174.8V186.1M1222.5 174.5V188.6M1223.5 176.2V190.5M1224.5 174.1V186.1M1225.5 176.3V186.1M1226.5 177.7V187.8M1227.5 178.0V186.4M1228.5 177.7V190.1M1229.5 176.5V187.0M1230.5 176.2V187.1M1231.5 176.0V187.0M1232.5 175.9V188.3M1233.5 176.1V187.3M1234.5 176.3V187.7M1235.5 176.2V185.7M1236.5 175.8V185.9M1237.5 174.2V186.3M1238.5 173.5V187.7M1239.5 176.3V187.3M1240.5 176.1V191.0M1241.5 176.4V187.0M1242.5 176.7V189.0M1243.5 175.9V189.7M1244.5 177.9V188.7M1245.5 176.1V187.4M1246.5 174.3V191.1M1247.5 179.3V190.4M1248.5 175.5V188.3M1249.5 177.8V186.7M1250.5 177.4V187.0M1251.5 176.4V186.3M1252.5 177.0V187.2M1253.5 173.8V187.1M1254.5 173.8V188.4M1255.5 177.5V187.0M1256.5 177.7V196.2M1257.5 178.8V191.7M1258.5 173.7V189.1M1259.5 175.1V185.5M1260.5 175.7V185.0M1261.5 178.1V190.2M1262.5 174.4V187.2M1263.5 173.6V191.2M1264.5 177.8V186.3M1265.5 174.4V190.0M1266.5 175.0V187.9M1267.5 175.8V184.9M1268.5 175.6V189.0M1269.5 172.5V186.2M1270.5 172.5V187.3M1271.5 176.7V187.0M1272.5 176.6V189.0M1273.5 177.0V188.5M1274.5 177.2V187.7M1275.5 177.4V187.0M1276.5 172.8V188.1M1277.5 175.4V185.5M1278.5 174.3V188.7M1279.5 176.7V187.1M1280.5 174.6V187.3M1281.5 170.0V187.9M1282.5 174.6V189.4M1283.5 176.5V190.0M1284.5 174.8V189.5M1285.5 172.9V187.2M1286.5 176.7V187.7M1287.5 176.3V187.8M1288.5 177.9V188.8M1289.5 175.4V186.7M1290.5 175.6V186.0M1291.5 177.6V189.4M1292.5 177.0V186.0M1293.5 177.5V190.5" stroke="#ff8000" stroke-width="1.25" fill="none"/>
<path d="M94.5 431.1V443.2M95.5 432.2V445.2M96.5 435.0V442.8M97.5 432.4V442.4M98.5 435.3V447.1M99.5 432.8V446.4M100.5 430.7V446.4M101.5 435.0V447.3M102.5 432.2V445.5M103.5 433.9V441.6M104.5 432.6V444.4M105.5 432.9V447.9M106.5 434.4V444.3M107.5 433.5V445.6M108.5 431.4V444.3M109.5 435.0V445.2M110.5 434.3V445.4M111.5 433.3V446.7M112.5 436.5V446.8M113.5 435.4V444.5M114.5 433.6V447.7M115.5 435.2V445.7M116.5 434.1V444.6M117.5 434.2V444.9M118.5 430.0V442.9M119.5 434.5V445.4M120.5 433.5V446.9M121.5 433.6V444.4M122.5 432.1V443.5M123.5 429.9V445.0M124.5 434.8V445.2M125.5 435.1V444.0M126.5 433.0V443.8M127.5 432.2V444.3M128.5 435.2V442.9M129.5 433.5V450.2M130.5 434.4V444.2M131.5 433.7V446.1M132.5 435.4V444.5M133.5 433.8V444.5M134.5 436.1V445.6M135.5 432.5V446.0M136.5 434.3V446.3M137.5 431.7V446.9M138.5 435.3V444.6M139.5 434.9V444.3M140.5 437.0V445.5M141.5 434.7V447.3M142.5 434.1V445.7M143.5 431.8V446.3M144.5 434.8V445.5M145.5 433.9V446.0M146.5 434.3V445.1M147.5 433.1V446.2M148.5 435.7V445.1M149.5 432.6V444.9M150.5 435.3V448.8M151.5 431.2V445.8M152.5 434.4V448.9M153.5 432.9V445.8M154.5 432.1V448.2M155.5 434.3V444.2M156.5 434.0V447.2M157.5 434.2V443.9M158.5 435.7V444.0M159.5 432.6V449.6M160.5 432.9V446.4M161.5 433.3V447.3M162.5 435.0V446.3M163.5 434.3V444.4M164.5 432.9V444.9M165.5 433.8V446.3M166.5 432.8V444.5M167.5 434.3V446.6M168.5 435.6V449.4M169.5 434.8V447.5M170.5 434.5V445.6M171.5 433.6V445.3M172.5 435.5V445.0M173.5 432.2V444.8M174.5 435.8V443.3M175.5 436.5V447.6M176.5 434.7V444.9M177.5 435.2V444.5M178.5 434.6V448.0M179.5 435.3V446.6M180.5 433.4V445.0M181.5 433.2V446.8M182.5 434.9V445.2M183.5 434.9V445.6M184.5 434.4V445.3M185.5 430.9V446.2M186.5 429.0V447.2M187.5 434.5V443.4M188.5 432.0V444.4M189.5 430.9V444.2M190.5 434.7V445.1M191.5 435.1V444.0M192.5 434.9V444.0M193.5 430.2V443.6M194.5 435.2V443.0M195.5 436.0V445.0M196.5 430.4V443.0M197.5 434.5V444.4M198.5 435.4V445.9M199.5 432.7V448.5M200.5 434.4V446.5M201.5 434.4V447.0M202.5 433.1V445.3M203.5 435.3V443.6M204.5 434.3V447.9M205.5 433.3V446.5M206.5 435.7V445.7M207.5 434.4V444.0M208.5 434.6V445.9M209.5 434.2V443.4M210.5 433.1V444.6M211.5 433.6V444.2M212.5 432.6V445.2M213.5 433.3V443.7M214.5 431.5V444.3M215.5 437.2V448.8M216.5 435.1V445.8M217.5 432.0V448.1M218.5 435.0V448.4M219.5 435.5V445.0M220.5 434.3V443.7M221.5 433.1V445.6M222.5 433.2V446.1M223.5 433.9V446.9M224.5 432.9V445.0M225.5 435.9V444.9M226.5 431.9V445.0M227.5 435.9V444.4M228.5 434.9V446.5M229.5 434.4V443.1M230.5 432.3V449.5M231.5 431.4V446.4M232.5 434.8V449.8M233.5 434.8V445.4M234.5 433.5V448.4M235.5 432.9V442.7M236.5 431.1V446.6M237.5 432.7V446.8M238.5 433.2V444.1M239.5 433.5V448.6M240.5 433.0V444.2M241.5 434.4V443.6M242.5 434.2V444.2M243.5 434.1V443.3M244.5 434.9V445.6M245.5 433.9V443.4M246.5 433.1V448.1M247.5 430.9V446.0M248.5 437.2V445.8M249.5 431.6V443.5M250.5 435.8V444.2M251.5 433.7V444.7M252.5 433.0V443.6M253.5 431.6V448.4M254.5 434.2V445.1M255.5 433.7V444.1M256.5 434.8V444.7M257.5 432.9V443.1M258.5 436.2V443.6M259.5 432.6V445.1M260.5 433.9V446.6M261.5 433.7V445.3M262.5 434.1V445.8M263.5 433.8V445.9M264.5 434.6V446.3M265.5 434.3V445.1M266.5 433.4V445.3M267.5 434.0V444.7M268.5 435.8V448.5M269.5 433.1V445.2M270.5 434.0V444.3M271.5 433.7V446.9M272.5 434.2V442.1M273.5 435.3V442.9M274.5 434.2V445.7M275.5 432.3V445.9M276.5 434.2V445.9M277.5 434.5V445.5M278.5 432.3V448.7M279.5 434.5V444.1M280.5 434.2V444.4M281.5 434.9V445.9M282.5 433.6V449.1M283.5 434.2V446.3M284.5 433.2V444.6M285.5 434.7V444.2M286.5 430.7V445.4M287.5 432.4V448.8M288.5 433.8V443.8M289.5 434.6V447.2M290.5 433.9V443.7M291.5 435.1V444.9M292.5 434.2V444.5M293.5 432.9V445.2M294.5 432.9V442.4M295.5 434.9V443.9M296.5 434.5V443.9M297.5 432.6V448.6M298.5 435.6V450.1M299.5 430.0V445.7M300.5 434.2V442.2M301.5 433.5V443.6M302.5 434.8V445.5M303.5 432.4V446.6M304.5 433.4V444.6M305.5 436.1V445.1M306.5 432.2V444.1M307.5 435.1V445.7M308.5 435.0V444.6M309.5 433.2V444.4M310.5 435.4V445.2M311.5 432.6V443.6M312.5 434.8V446.4M313.5 433.2V443.9M314.5 436.1V449.1M315.5 434.4V445.7M316.5 436.3V445.3M317.5 433.6V447.2M318.5 435.4V445.1M319.5 433.9V444.7M320.5 431.5V443.9M321.5 434.7V447.2M322.5 432.9V443.4M323.5 434.7V444.9M324.5 435.5V446.4M325.5 432.2V448.8M326.5 431.2V444.7M327.5 433.0V445.1M328.5 434.2V444.4M329.5 436.5V444.2M330.5 434.3V445.5M331.5 432.5V444.5M332.5 431.6V442.6M333.5 432.6V444.7M334.5 434.7V444.4M335.5 434.0V445.2M336.5 436.2V443.5M337.5 433.3V447.7M338.5 435.4V447.9M339.5 435.2V443.1M340.5 436.4V444.0M341.5 432.8V444.7M342.5 435.8V444.4M343.5 430.4V444.5M344.5 435.5V446.3M345.5 434.1V443.9M346.5 434.3V447.2M347.5 433.5V443.8M348.5 435.5V446.9M349.5 434.9V443.4M350.5 433.6V443.8M351.5 435.9V445.3M352.5 431.4V445.2M353.5 432.6V446.6M354.5 433.0V444.5M355.5 434.4V443.6M356.5 434.7V449.2M357.5 432.6V445.9M358.5 435.6V443.8M359.5 436.7V445.3M360.5 434.7V447.0M361.5 432.1V443.7M362.5 433.0V444.7M363.5 436.2V445.0M364.5 435.1V446.8M365.5 432.4V446.0M366.5 435.9V445.6M367.5 430.8V443.5M368.5 432.2V446.0M369.5 436.0V444.1M370.5 434.6V443.8M371.5 434.9V446.3M372.5 435.4V446.8M373.5 434.8V445.1M374.5 435.7V444.5M375.5 432.6V444.6M376.5 432.9V446.1M377.5 435.2V443.0M378.5 434.8V443.9M379.5 431.8V445.7M380.5 432.0V445.2M381.5 434.4V444.8M382.5 436.1V443.8M383.5 434.4V445.4M384.5 433.5V446.0M385.5 428.3V442.5M386.5 433.6V447.2M387.5 434.4V445.6M388.5 434.0V444.8M389.5 433.4V445.0M390.5 432.8V444.6M391.5 432.7V446.4M392.5 433.7V444.8M393.5 432.2V444.4M394.5 434.5V451.7M395.5 434.2V449.7M396.5 436.0V446.2M397.5 434.5V444.6M398.5 434.5V446.5M399.5 435.3V445.2M400.5 431.8V443.8M401.5 433.5V444.5M402.5 434.0V447.8M403.5 431.2V445.1M404.5 433.6V443.6M405.5 433.7V445.1M406.5 432.5V443.5M407.5 434.5V445.6M408.5 433.3V444.7M409.5 435.0V445.7M410.5 430.1V444.7M411.5 434.0V443.8M412.5 436.1V448.6M413.5 433.4V448.1M414.5 434.4V443.5M415.5 430.1V446.7M416.5 432.6V445.9M417.5 432.3V444.5M418.5 432.1V442.8M419.5 434.5V445.7M420.5 435.2V444.5M421.5 432.9V444.5M422.5 434.8V443.9M423.5 434.8V443.0M424.5 434.5V444.2M425.5 435.7V445.5M426.5 435.6V445.6M427.5 431.4V445.2M428.5 432.5V443.1M429.5 432.5V448.9M430.5 431.6V443.3M431.5 436.2V442.7M432.5 434.3V445.5M433.5 436.8V444.0M434.5 435.5V448.1M435.5 433.4V446.4M436.5 434.6V445.9M437.5 434.2V445.0M438.5 434.7V447.1M439.5 436.0V443.7M440.5 433.3V442.8M441.5 436.2V443.6M442.5 435.2V444.8M443.5 434.7V445.3M444.5 435.8V445.4M445.5 434.4V444.7M446.5 434.2V446.4M447.5 430.6V444.6M448.5 432.5V443.5M449.5 436.6V444.7M450.5 433.1V448.5M451.5 435.9V445.3M452.5 435.9V446.6M453.5 434.2V445.8M454.5 433.0V444.7M455.5 432.9V445.7M456.5 434.1V443.5M457.5 430.1V444.3M458.5 431.2V443.2M459.5 430.1V448.7M460.5 429.0V445.2M461.5 434.6V445.2M462.5 432.2V449.7M463.5 434.8V446.3M464.5 434.9V446.3M465.5 432.3V445.2M466.5 433.9V444.1M467.5 432.2V443.7M468.5 439.5V601.5M469.5 601.0V651.2M470.5 640.5V652.7M471.5 642.7V652.9M472.5 641.4V652.5M473.5 638.6V650.8M474.5 636.7V648.7M475.5 635.8V648.0M476.5 632.3V649.9M477.5 634.6V647.4M478.5 635.9V646.5M479.5 632.4V645.5M480.5 635.0V644.4M481.5 634.5V645.1M482.5 635.6V646.7M483.5 634.9V643.5M484.5 632.6V645.2M485.5 636.7V645.3M486.5 636.0V645.1M487.5 633.8V642.3M488.5 629.6V645.2M489.5 634.5V645.9M490.5 632.1V645.2M491.5 634.6V645.9M492.5 632.7V647.7M493.5 630.6V643.1M494.5 632.2V645.4M495.5 632.7V643.3M496.5 634.5V644.7M497.5 635.9V646.5M498.5 635.2V645.6M499.5 634.2V644.4M500.5 633.5V643.8M501.5 632.4V643.6M502.5 636.3V644.3M503.5 634.3V644.8M504.5 637.5V645.5M505.5 635.0V646.2M506.5 633.6V646.4M507.5 636.2V647.4M508.5 634.8V644.2M509.5 630.2V646.3M510.5 630.7V645.9M511.5 635.8V648.4M512.5 636.2V646.3M513.5 635.4V645.0M514.5 632.8V647.1M515.5 632.8V646.8M516.5 633.4V645.0M517.5 631.1V645.8M518.5 632.0V644.4M519.5 636.1V647.0M520.5 633.3V645.6M521.5 634.7V644.5M522.5 634.7V645.8M523.5 633.4V646.7M524.5 632.9V644.0M525.5 633.9V646.1M526.5 635.6V646.4M527.5 633.4V645.5M528.5 635.6V644.9M529.5 636.2V647.4M530.5 632.2V644.7M531.5 632.5V646.1M532.5 636.0V651.3M533.5 634.7V647.5M534.5 635.3V646.0M535.5 634.7V643.7M536.5 635.2V645.6M537.5 634.7V646.1M538.5 632.9V644.8M539.5 633.3V643.6M540.5 635.8V649.2M541.5 635.1V645.2M542.5 633.5V644.1M543.5 634.8V646.7M544.5 635.0V645.8M545.5 632.6V644.8M546.5 631.1V645.2M547.5 636.2V643.3M548.5 633.0V644.0M549.5 631.5V645.0M550.5 636.6V646.0M551.5 635.9V645.7M552.5 634.6V645.8M553.5 634.1V646.2M554.5 634.8V643.2M555.5 634.8V644.8M556.5 634.9V644.6M557.5 634.6V646.7M558.5 632.8V645.8M559.5 633.9V646.5M560.5 634.0V646.0M561.5 635.8V647.8M562.5 634.9V644.0M563.5 635.6V644.3M564.5 635.4V645.4M565.5 634.7V644.4M566.5 636.2V643.2M567.5 633.6V648.4M568.5 635.4V643.7M569.5 633.7V645.8M570.5 636.4V645.5M571.5 634.8V643.4M572.5 633.1V646.1M573.5 634.0V645.4M574.5 634.5V647.1M575.5 633.5V645.3M576.5 634.9V644.0M577.5 634.1V646.2M578.5 633.2V645.3M579.5 636.4V643.0M580.5 634.3V645.4M581.5 635.0V646.3M582.5 633.0V645.7M583.5 635.1V646.0M584.5 633.0V648.4M585.5 633.4V645.0M586.5 637.1V645.8M587.5 634.3V645.2M588.5 634.6V645.1M589.5 636.0V647.5M590.5 636.1V645.5M591.5 634.0V646.1M592.5 634.1V647.4M593.5 632.8V646.1M594.5 634.5V643.0M595.5 633.2V644.5M596.5 635.1V649.4M597.5 634.0V645.6M598.5 635.0V643.9M599.5 635.8V646.3M600.5 635.5V646.1M601.5 637.7V647.1M602.5 635.1V646.2M603.5 635.8V644.1M604.5 635.8V646.6M605.5 634.1V645.9M606.5 634.7V645.1M607.5 633.4V648.4M608.5 634.7V648.7M609.5 637.4V645.7M610.5 636.3V646.5M611.5 636.8V646.7M612.5 635.5V645.7M613.5 632.1V646.5M614.5 634.2V645.6M615.5 635.9V644.9M616.5 635.4V645.6M617.5 633.7V645.4M618.5 635.3V643.5M619.5 634.2V644.2M620.5 632.5V644.7M621.5 635.8V643.7M622.5 636.7V646.3M623.5 634.6V645.5M624.5 632.8V643.9M625.5 635.2V645.5M626.5 633.1V648.8M627.5 635.1V646.6M628.5 633.6V644.0M629.5 633.9V645.9M630.5 636.5V647.3M631.5 635.0V645.5M632.5 637.6V646.4M633.5 633.9V649.0M634.5 633.8V648.9M635.5 638.9V648.6M636.5 636.9V648.3M637.5 636.0V647.9M638.5 640.4V650.2M639.5 639.8V651.6M640.5 640.9V651.3M641.5 640.0V654.1M642.5 636.9V652.1M643.5 639.5V652.5M644.5 638.7V651.3M645.5 641.1V652.6M646.5 641.1V650.5M647.5 636.7V650.5M648.5 641.4V648.1M649.5 640.4V648.7M650.5 643.4V655.5M651.5 640.7V650.7M652.5 635.4V650.3M653.5 638.9V650.5M654.5 633.4V649.3M655.5 636.4V647.5M656.5 635.3V642.9M657.5 632.1V646.2M658.5 632.0V640.2M659.5 630.2V639.9M660.5 626.7V637.1M661.5 624.2V634.9M662.5 623.0V630.0M663.5 620.6V629.8M664.5 617.9V627.9M665.5 615.7V627.0M666.5 616.0V625.0M667.5 618.1V628.5M668.5 621.0V631.9M669.5 625.2V631.5M670.5 628.1V637.6M671.5 634.5V641.3M672.5 635.8V647.2M673.5 643.5V650.7M674.5 645.4V658.6M675.5 651.7V660.9M676.5 655.7V664.9M677.5 654.4V663.9M678.5 658.1V664.4M679.5 654.5V661.3M680.5 647.5V659.5M681.5 645.5V654.0M682.5 639.4V652.1M683.5 637.7V648.3M684.5 634.3V644.6M685.5 626.6V638.7M686.5 628.9V638.1M687.5 632.2V641.3M688.5 637.5V644.7M689.5 640.1V649.6M690.5 643.4V655.2M691.5 644.4V655.6M692.5 646.9V656.6M693.5 650.5V658.1M694.5 649.4V659.5M695.5 648.4V663.6M696.5 650.6V662.3M697.5 650.6V661.1M698.5 651.4V659.4M699.5 651.5V659.8M700.5 648.6V657.9M701.5 647.6V656.1M702.5 645.0V655.1M703.5 645.9V653.6M704.5 642.5V652.1M705.5 638.1V655.3M706.5 646.3V653.9M707.5 645.2V658.0M708.5 646.8V657.7M709.5 651.5V658.8M710.5 649.5V661.4M711.5 649.2V662.5M712.5 654.0V660.8M713.5 653.1V664.4M714.5 654.1V662.0M715.5 653.5V663.6M716.5 650.2V663.0M717.5 650.5V663.5M718.5 649.8V663.9M719.5 654.3V664.2M720.5 653.1V666.6M721.5 654.8V663.0M722.5 651.8V661.7M723.5 652.0V664.0M724.5 651.2V663.8M725.5 654.1V663.5M726.5 652.2V662.9M727.5 653.2V662.2M728.5 651.9V662.4M729.5 652.3V663.7M730.5 653.4V663.8M731.5 653.4V665.0M732.5 653.1V662.1M733.5 651.3V663.6M734.5 650.5V662.8M735.5 651.1V661.9M736.5 652.9V662.2M737.5 653.3V660.8M738.5 651.9V663.7M739.5 653.0V664.3M740.5 651.4V660.2M741.5 650.3V661.4M742.5 651.8V665.2M743.5 650.9V664.6M744.5 651.3V661.3M745.5 650.5V663.0M746.5 651.4V661.2M747.5 652.9V662.2M748.5 649.0V661.8M749.5 650.8V664.5M750.5 652.2V661.2M751.5 649.7V659.9M752.5 649.2V664.0M753.5 651.4V660.9M754.5 649.8V664.8M755.5 651.9V661.3M756.5 651.2V659.5M757.5 651.2V662.5M758.5 653.4V664.5M759.5 649.9V662.5M760.5 653.0V660.0M761.5 651.1V660.0M762.5 649.7V660.8M763.5 650.1V660.8M764.5 652.0V663.0M765.5 651.8V662.2M766.5 653.2V666.5M767.5 661.1V674.4M768.5 671.2V678.1M769.5 673.8V677.6M770.5 453.6V676.3M771.5 445.2V456.1M772.5 440.4V448.8M773.5 437.6V446.6M774.5 434.0V442.6M775.5 431.4V439.8M776.5 427.7V437.6M777.5 426.3V436.2M778.5 428.8V438.2M779.5 428.8V437.7M780.5 430.1V437.9M781.5 428.0V437.4M782.5 430.9V438.3M783.5 430.9V441.2M784.5 431.9V441.0M785.5 429.2V443.9M786.5 431.5V443.9M787.5 431.0V442.7M788.5 430.1V445.4M789.5 431.4V444.2M790.5 431.7V444.3M791.5 432.2V444.7M792.5 430.5V442.0M793.5 433.0V443.0M794.5 430.2V444.1M795.5 431.1V441.5M796.5 432.7V442.1M797.5 430.5V441.0M798.5 432.6V443.6M799.5 431.0V443.4M800.5 432.1V442.6M801.5 431.1V443.1M802.5 431.8V444.2M803.5 431.4V441.3M804.5 430.9V443.5M805.5 432.4V445.8M806.5 431.0V441.9M807.5 431.2V441.6M808.5 431.4V443.7M809.5 429.6V444.0M810.5 432.8V446.4M811.5 430.8V443.3M812.5 428.4V441.7M813.5 430.1V442.8M814.5 429.6V446.4M815.5 430.4V441.2M816.5 432.1V442.5M817.5 431.0V441.2M818.5 429.3V443.6M819.5 430.9V439.8M820.5 432.5V444.4M821.5 432.2V441.9M822.5 431.5V444.5M823.5 431.7V439.8M824.5 431.2V441.7M825.5 426.9V439.8M826.5 431.5V440.9M827.5 432.0V439.9M828.5 432.5V442.3M829.5 431.6V442.0M830.5 431.9V441.5M831.5 430.9V441.2M832.5 432.0V441.8M833.5 428.4V441.2M834.5 432.5V441.7M835.5 429.2V441.5M836.5 431.9V443.0M837.5 430.0V441.4M838.5 430.5V439.6M839.5 429.1V443.8M840.5 429.2V441.8M841.5 432.5V441.4M842.5 430.2V441.9M843.5 426.9V442.9M844.5 434.0V441.3M845.5 428.1V442.4M846.5 430.5V441.9M847.5 431.5V441.3M848.5 430.1V439.5M849.5 429.6V440.9M850.5 431.9V441.4M851.5 428.4V441.3M852.5 431.8V442.8M853.5 429.5V444.7M854.5 430.8V438.0M855.5 430.5V439.4M856.5 429.6V439.1M857.5 430.9V439.5M858.5 430.4V440.8M859.5 431.3V440.3M860.5 427.4V441.7M861.5 429.4V440.1M862.5 429.4V443.1M863.5 428.6V439.0M864.5 427.4V440.2M865.5 427.6V439.2M866.5 427.3V439.2M867.5 428.3V438.5M868.5 427.5V438.6M869.5 428.5V442.1M870.5 429.5V438.0M871.5 427.8V436.9M872.5 427.2V438.0M873.5 429.4V438.2M874.5 429.1V438.6M875.5 429.1V439.2M876.5 429.5V437.9M877.5 425.1V436.9M878.5 428.5V437.6M879.5 424.5V438.6M880.5 428.4V438.5M881.5 427.5V437.3M882.5 427.0V437.9M883.5 425.0V438.5M884.5 424.6V439.0M885.5 426.4V436.8M886.5 425.6V438.2M887.5 425.4V435.9M888.5 424.2V438.2M889.5 426.4V437.6M890.5 422.9V438.5M891.5 426.5V437.0M892.5 424.5V438.8M893.5 427.2V438.9M894.5 428.5V437.5M895.5 425.4V438.2M896.5 426.1V437.5M897.5 426.9V439.1M898.5 426.8V435.7M899.5 427.6V439.6M900.5 428.4V440.1M901.5 426.7V437.3M902.5 426.1V439.4M903.5 428.4V439.4M904.5 427.9V438.4M905.5 429.0V439.0M906.5 424.7V440.4M907.5 429.3V438.0M908.5 426.0V439.4M909.5 428.6V443.7M910.5 425.5V444.7M911.5 427.8V439.2M912.5 427.7V437.2M913.5 424.1V437.5M914.5 428.4V438.9M915.5 428.8V441.4M916.5 427.3V440.9M917.5 427.8V440.8M918.5 428.2V437.8M919.5 429.4V441.4M920.5 427.3V440.4M921.5 426.4V442.1M922.5 431.3V440.3M923.5 430.8V440.8M924.5 427.9V440.3M925.5 425.7V438.9M926.5 430.4V440.9M927.5 429.2V439.6M928.5 431.3V440.5M929.5 431.2V441.9M930.5 427.9V442.1M931.5 431.0V439.0M932.5 427.0V440.5M933.5 427.5V439.0M934.5 429.8V440.0M935.5 429.0V440.8M936.5 428.0V439.2M937.5 428.8V438.3M938.5 431.0V439.8M939.5 429.7V440.1M940.5 429.0V443.6M941.5 428.5V442.5M942.5 429.9V440.7M943.5 430.2V443.5M944.5 431.3V445.9M945.5 429.0V446.5M946.5 429.5V442.5M947.5 431.7V442.1M948.5 430.3V443.9M949.5 431.4V444.8M950.5 432.5V441.5M951.5 430.8V441.4M952.5 432.4V439.6M953.5 432.9V444.8M954.5 429.9V442.7M955.5 430.9V441.6M956.5 433.2V444.9M957.5 430.4V440.2M958.5 431.2V446.7M959.5 433.8V441.7M960.5 431.1V442.6M961.5 429.9V442.7M962.5 428.9V441.3M963.5 429.3V443.3M964.5 432.6V443.0M965.5 431.8V444.0M966.5 430.3V443.5M967.5 433.0V445.4M968.5 431.4V443.7M969.5 434.5V442.8M970.5 430.5V442.7M971.5 432.6V441.6M972.5 432.6V445.5M973.5 433.3V445.1M974.5 431.1V441.9M975.5 429.6V440.9M976.5 430.9V443.0M977.5 429.1V442.8M978.5 432.4V443.2M979.5 431.3V444.8M980.5 430.1V440.3M981.5 432.0V443.3M982.5 430.7V443.7M983.5 432.3V445.0M984.5 430.7V443.1M985.5 429.7V442.5M986.5 429.1V442.0M987.5 431.9V442.5M988.5 431.8V444.6M989.5 431.2V440.2M990.5 430.4V439.9M991.5 431.2V444.0M992.5 432.2V440.8M993.5 429.8V442.0M994.5 432.3V443.2M995.5 428.4V440.8M996.5 432.1V441.6M997.5 430.3V440.8M998.5 431.5V443.1M999.5 431.2V443.4M1000.5 431.0V443.7M1001.5 430.6V442.4M1002.5 429.8V445.0M1003.5 432.1V445.2M1004.5 432.5V443.4M1005.5 432.7V440.1M1006.5 432.5V443.7M1007.5 432.6V443.1M1008.5 431.5V443.5M1009.5 432.0V442.6M1010.5 432.5V441.2M1011.5 431.6V441.9M1012.5 430.6V444.0M1013.5 428.5V440.0M1014.5 432.8V445.4M1015.5 431.6V443.4M1016.5 434.0V443.6M1017.5 430.4V441.7M1018.5 430.4V441.4M1019.5 434.2V443.4M1020.5 431.6V446.0M1021.5 430.0V442.1M1022.5 432.2V442.1M1023.5 429.8V444.9M1024.5 432.6V441.2M1025.5 430.0V441.7M1026.5 432.6V441.4M1027.5 434.6V442.0M1028.5 431.4V441.9M1029.5 433.8V441.4M1030.5 430.6V442.7M1031.5 431.7V447.5M1032.5 433.5V444.5M1033.5 430.3V442.6M1034.5 430.9V446.0M1035.5 431.7V443.6M1036.5 431.5V439.5M1037.5 430.4V442.2M1038.5 432.3V443.2M1039.5 432.9V442.5M1040.5 428.5V442.7M1041.5 432.4V442.9M1042.5 431.6V443.8M1043.5 431.9V443.4M1044.5 430.4V440.0M1045.5 432.1V443.1M1046.5 431.1V440.5M1047.5 432.3V441.8M1048.5 432.3V440.1M1049.5 433.6V443.2M1050.5 430.5V442.8M1051.5 430.7V445.1M1052.5 430.6V443.3M1053.5 432.2V442.9M1054.5 432.2V442.9M1055.5 434.2V442.1M1056.5 429.8V443.7M1057.5 432.1V441.0M1058.5 431.3V442.6M1059.5 429.3V441.6M1060.5 432.3V444.1M1061.5 431.6V441.3M1062.5 430.8V442.7M1063.5 434.0V442.7M1064.5 433.5V442.3M1065.5 430.0V443.0M1066.5 433.1V442.2M1067.5 430.2V444.4M1068.5 431.2V444.0M1069.5 431.0V442.0M1070.5 430.1V443.5M1071.5 432.2V441.0M1072.5 433.4V444.9M1073.5 429.7V441.5M1074.5 430.7V442.4M1075.5 432.2V440.4M1076.5 432.7V442.4M1077.5 432.4V444.6M1078.5 431.5V446.0M1079.5 433.1V444.8M1080.5 430.2V442.0M1081.5 429.3V440.7M1082.5 431.6V442.3M1083.5 431.4V442.6M1084.5 431.4V444.3M1085.5 432.3V442.3M1086.5 431.2V445.4M1087.5 431.0V442.0M1088.5 432.5V442.4M1089.5 430.6V440.3M1090.5 429.4V440.7M1091.5 431.3V443.0M1092.5 432.6V442.4M1093.5 431.4V442.1M1094.5 430.1V441.9M1095.5 430.1V441.4M1096.5 430.7V441.1M1097.5 431.6V443.1M1098.5 434.1V446.6M1099.5 431.6V441.2M1100.5 431.9V442.5M1101.5 431.8V443.7M1102.5 433.2V441.5M1103.5 432.0V443.4M1104.5 432.9V442.8M1105.5 432.9V443.3M1106.5 432.6V444.8M1107.5 430.4V439.6M1108.5 430.9V444.5M1109.5 431.8V441.5M1110.5 434.1V442.3M1111.5 433.2V443.3M1112.5 432.1V441.2M1113.5 432.7V442.0M1114.5 432.7V440.8M1115.5 431.2V445.0M1116.5 430.2V441.9M1117.5 427.8V446.7M1118.5 430.9V443.3M1119.5 431.3V442.9M1120.5 432.0V442.4M1121.5 430.0V442.7M1122.5 429.7V444.3M1123.5 432.7V442.2M1124.5 429.7V444.4M1125.5 432.3V445.2M1126.5 433.3V445.1M1127.5 430.0V443.4M1128.5 430.0V443.6M1129.5 432.7V439.9M1130.5 430.6V443.7M1131.5 432.1V444.0M1132.5 431.7V449.1M1133.5 430.7V444.6M1134.5 434.4V445.1M1135.5 432.2V442.4M1136.5 434.3V441.5M1137.5 425.8V442.2M1138.5 428.7V444.9M1139.5 431.9V443.2M1140.5 433.0V443.7M1141.5 432.3V445.0M1142.5 432.3V441.7M1143.5 432.9V441.7M1144.5 431.9V444.0M1145.5 430.9V443.9M1146.5 432.7V440.9M1147.5 431.7V441.5M1148.5 432.7V441.7M1149.5 427.5V443.8M1150.5 433.2V442.6M1151.5 432.1V441.6M1152.5 431.8V443.0M1153.5 433.4V441.9M1154.5 433.7V440.0M1155.5 432.4V443.3M1156.5 431.9V443.7M1157.5 431.6V443.9M1158.5 432.3V443.0M1159.5 431.2V441.0M1160.5 430.6V442.2M1161.5 431.2V442.7M1162.5 431.8V443.1M1163.5 432.0V442.7M1164.5 431.7V441.3M1165.5 427.8V441.5M1166.5 432.0V445.0M1167.5 433.4V442.6M1168.5 432.2V441.1M1169.5 429.7V441.2M1170.5 430.4V444.4M1171.5 431.8V441.5M1172.5 429.6V441.8M1173.5 432.0V443.3M1174.5 431.0V441.4M1175.5 427.4V444.2M1176.5 432.6V443.0M1177.5 429.8V442.8M1178.5 430.7V440.1M1179.5 431.5V442.0M1180.5 433.1V442.9M1181.5 433.5V442.0M1182.5 432.6V441.7M1183.5 430.7V441.9M1184.5 432.1V441.8M1185.5 426.9V440.8M1186.5 431.0V442.9M1187.5 430.5V442.6M1188.5 433.3V442.1M1189.5 431.4V439.7M1190.5 433.0V441.6M1191.5 429.9V441.2M1192.5 432.0V443.1M1193.5 431.0V440.9M1194.5 434.2V441.5M1195.5 432.0V444.3M1196.5 429.9V441.3M1197.5 432.2V440.9M1198.5 433.1V446.1M1199.5 432.8V442.1M1200.5 427.3V443.0M1201.5 429.8V444.7M1202.5 431.9V444.9M1203.5 431.4V440.6M1204.5 432.0V443.3M1205.5 431.6V443.4M1206.5 433.3V447.6M1207.5 432.0V440.6M1208.5 432.0V443.5M1209.5 431.6V441.1M1210.5 430.2V443.8M1211.5 431.1V440.8M1212.5 431.1V441.7M1213.5 429.0V446.2M1214.5 429.3V442.1M1215.5 432.8V441.4M1216.5 433.4V442.2M1217.5 433.6V442.3M1218.5 428.5V442.2M1219.5 431.2V441.7M1220.5 430.6V444.2M1221.5 432.6V442.0M1222.5 432.9V441.1M1223.5 431.5V443.6M1224.5 431.4V445.5M1225.5 431.5V445.4M1226.5 430.5V445.4M1227.5 431.7V442.4M1228.5 431.3V442.1M1229.5 430.4V442.0M1230.5 428.2V441.6M1231.5 430.7V441.0M1232.5 431.5V444.1M1233.5 433.0V441.4M1234.5 431.9V440.3M1235.5 434.5V442.9M1236.5 430.8V440.9M1237.5 431.3V441.0M1238.5 431.8V441.9M1239.5 428.5V444.6M1240.5 432.7V443.0M1241.5 431.4V445.7M1242.5 430.5V441.0M1243.5 432.3V439.8M1244.5 431.3V441.3M1245.5 430.3V440.8M1246.5 430.9V441.3M1247.5 431.0V444.6M1248.5 433.8V445.3M1249.5 433.2V443.5M1250.5 432.4V445.0M1251.5 431.5V442.1M1252.5 433.4V444.3M1253.5 431.8V441.5M1254.5 431.4V444.5M1255.5 432.7V441.6M1256.5 427.7V441.0M1257.5 432.4V445.5M1258.5 428.2V444.5M1259.5 432.4V441.9M1260.5 432.3V441.8M1261.5 431.8V446.2M1262.5 432.0V443.6M1263.5 431.5V440.7M1264.5 431.9V442.4M1265.5 433.7V443.8M1266.5 432.6V439.3M1267.5 431.6V440.6M1268.5 432.7V445.0M1269.5 431.4V442.7M1270.5 431.7V440.5M1271.5 430.9V440.0M1272.5 432.5V442.7M1273.5 429.3V443.9M1274.5 430.5V443.0M1275.5 431.5V443.7M1276.5 429.2V445.6M1277.5 432.9V441.9M1278.5 431.4V441.8M1279.5 432.3V443.3M1280.5 432.8V440.0M1281.5 432.5V440.4M1282.5 433.1V441.0M1283.5 429.4V439.7M1284.5 432.9V440.1M1285.5 431.1V445.4M1286.5 433.2V444.3M1287.5 430.6V445.5M1288.5 431.5V443.8M1289.5 429.2V442.3M1290.5 431.2V440.2M1291.5 432.8V441.1M1292.5 432.9V441.7M1293.5 431.0V441.3" stroke="#ffff00" stroke-width="1.25" fill="none"/>
<path d="M94.5 343.7V391.0M95.5 340.9V388.8M96.5 350.6V388.8M97.5 343.9V397.8M98.5 338.4V384.2M99.5 335.7V391.0M100.5 331.9V387.0M101.5 321.4V384.7M102.5 341.0V390.3M103.5 342.8V390.4M104.5 358.4V387.4M105.5 339.5V402.7M106.5 340.3V406.6M107.5 348.1V385.8M108.5 344.8V385.6M109.5 328.3V392.7M110.5 318.0V408.2M111.5 347.3V396.3M112.5 331.7V388.5M113.5 339.3V388.6M114.5 322.4V379.4M115.5 348.0V392.4M116.5 320.5V382.3M117.5 338.5V385.3M118.5 331.0V389.8M119.5 336.8V398.4M120.5 337.8V391.6M121.5 341.8V385.1M122.5 343.0V393.8M123.5 331.8V382.6M124.5 344.3V380.4M125.5 328.6V384.1M126.5 346.7V390.2M127.5 328.7V390.6M128.5 343.0V400.3M129.5 339.0V398.2M130.5 332.1V380.1M131.5 341.3V389.6M132.5 344.6V387.2M133.5 346.3V391.5M134.5 338.3V408.2M135.5 340.5V389.8M136.5 336.8V394.6M137.5 337.9V398.7M138.5 322.8V384.9M139.5 319.7V386.0M140.5 349.0V400.6M141.5 336.4V403.2M142.5 344.3V381.3M143.5 340.5V389.5M144.5 333.9V408.4M145.5 345.0V381.5M146.5 349.7V409.7M147.5 335.4V389.2M148.5 333.9V393.8M149.5 353.4V395.9M150.5 321.7V396.5M151.5 336.1V388.1M152.5 344.5V381.6M153.5 348.1V386.5M154.5 347.6V384.3M155.5 345.7V388.8M156.5 343.9V392.9M157.5 344.8V385.9M158.5 351.6V382.3M159.5 342.0V395.0M160.5 342.7V386.0M161.5 351.6V388.5M162.5 347.5V386.5M163.5 345.9V393.0M164.5 354.2V385.4M165.5 348.0V388.3M166.5 341.8V381.7M167.5 348.8V384.9M168.5 347.6V380.8M169.5 344.0V380.4M170.5 339.0V395.6M171.5 349.2V393.4M172.5 343.4V387.0M173.5 342.5V386.4M174.5 345.7V382.0M175.5 336.7V387.3M176.5 328.3V394.8M177.5 348.1V385.2M178.5 340.1V390.4M179.5 335.6V394.6M180.5 334.4V377.6M181.5 348.5V385.4M182.5 339.1V380.6M183.5 343.3V379.3M184.5 351.6V387.6M185.5 329.3V396.8M186.5 345.5V388.1M187.5 329.0V390.1M188.5 323.8V388.0M189.5 341.5V377.5M190.5 335.6V390.3M191.5 341.4V392.0M192.5 336.8V390.7M193.5 341.3V394.3M194.5 344.4V387.9M195.5 340.1V384.6M196.5 342.5V389.9M197.5 343.4V379.5M198.5 325.8V386.1M199.5 342.2V380.2M200.5 336.8V382.3M201.5 349.7V392.9M202.5 346.5V396.1M203.5 336.9V403.2M204.5 325.9V394.2M205.5 324.7V394.9M206.5 342.0V385.5M207.5 340.3V385.9M208.5 352.7V389.6M209.5 348.4V386.7M210.5 337.0V385.3M211.5 343.7V401.0M212.5 346.6V392.0M213.5 343.8V396.2M214.5 346.1V385.2M215.5 339.5V391.9M216.5 343.6V385.3M217.5 347.9V379.0M218.5 345.3V381.4M219.5 345.3V385.1M220.5 339.4V379.4M221.5 353.1V385.5M222.5 338.6V379.6M223.5 335.6V379.6M224.5 336.9V380.1M225.5 330.2V385.8M226.5 308.8V379.9M227.5 318.0V373.6M228.5 316.7V374.3M229.5 289.9V369.6M230.5 287.0V359.9M231.5 316.9V368.4M232.5 306.7V357.2M233.5 316.7V386.3M234.5 310.2V368.9M235.5 324.8V386.0M236.5 335.8V411.2M237.5 338.9V391.6M238.5 318.5V392.5M239.5 347.5V419.1M240.5 344.5V397.5M241.5 345.4V406.0M242.5 344.2V404.2M243.5 351.7V427.5M244.5 326.0V409.6M245.5 349.4V432.5M246.5 359.1V405.9M247.5 328.8V428.7M248.5 348.1V411.2M249.5 364.7V452.7M250.5 365.0V432.5M251.5 354.6V429.3M252.5 354.8V436.1M253.5 347.9V452.5M254.5 372.0V447.6M255.5 347.6V443.2M256.5 377.5V471.1M257.5 384.2V449.1M258.5 380.3V469.7M259.5 388.9V458.4M260.5 404.9V461.2M261.5 402.2V461.1M262.5 409.5V466.8M263.5 428.5V465.8M264.5 392.7V466.2M265.5 406.0V464.2M266.5 418.9V461.5M267.5 416.1V464.3M268.5 397.8V465.2M269.5 422.4V463.9M270.5 424.4V470.7M271.5 428.3V478.5M272.5 428.3V466.4M273.5 417.9V468.9M274.5 425.3V463.1M275.5 433.3V474.4M276.5 417.0V475.3M277.5 430.3V491.7M278.5 428.1V497.1M279.5 433.0V469.7M280.5 430.6V487.5M281.5 437.3V481.9M282.5 430.2V486.4M283.5 440.2V500.7M284.5 440.3V489.2M285.5 432.6V474.2M286.5 426.3V473.9M287.5 424.0V491.4M288.5 442.1V480.7M289.5 426.9V474.4M290.5 434.0V481.0M291.5 432.7V462.3M292.5 436.9V496.5M293.5 440.4V471.4M294.5 433.9V476.1M295.5 436.4V490.4M296.5 424.4V473.4M297.5 429.3V473.8M298.5 431.7V485.7M299.5 432.8V474.7M300.5 425.7V471.3M301.5 423.8V474.8M302.5 414.6V471.9M303.5 423.4V472.5M304.5 430.1V459.8M305.5 414.9V463.7M306.5 428.3V467.4M307.5 415.7V486.2M308.5 422.9V487.1M309.5 406.7V462.6M310.5 414.5V466.6M311.5 415.6V472.6M312.5 412.3V461.7M313.5 409.3V463.3M314.5 405.8V463.7M315.5 404.7V466.2M316.5 388.8V459.9M317.5 410.9V459.7M318.5 393.4V461.5M319.5 405.7V460.0M320.5 410.8V459.9M321.5 406.8V452.0M322.5 400.2V460.2M323.5 405.7V467.2M324.5 413.4V460.4M325.5 397.4V455.7M326.5 391.8V462.1M327.5 404.4V453.1M328.5 395.5V461.6M329.5 409.7V474.1M330.5 376.3V453.1M331.5 393.0V453.3M332.5 402.7V447.3M333.5 376.8V454.8M334.5 394.9V445.8M335.5 386.3V447.0M336.5 384.7V449.0M337.5 400.8V447.3M338.5 381.5V452.0M339.5 393.2V447.3M340.5 393.7V445.0M341.5 400.6V460.8M342.5 397.8V440.1M343.5 382.5V441.0M344.5 384.1V441.0M345.5 390.7V445.4M346.5 389.9V441.0M347.5 393.6V463.7M348.5 397.9V450.7M349.5 400.6V436.3M350.5 366.1V454.5M351.5 384.3V440.7M352.5 395.4V438.3M353.5 380.4V444.4M354.5 389.5V438.2M355.5 380.7V437.3M356.5 380.1V437.0M357.5 367.3V442.3M358.5 384.9V443.3M359.5 338.5V442.6M360.5 391.1V449.7M361.5 383.2V441.2M362.5 380.8V437.2M363.5 360.4V429.4M364.5 363.8V450.3M365.5 368.6V447.8M366.5 388.0V431.7M367.5 384.5V432.0M368.5 384.7V420.3M369.5 376.2V439.0M370.5 367.8V431.7M371.5 369.9V450.5M372.5 368.5V446.2M373.5 364.9V427.8M374.5 373.7V425.9M375.5 383.3V419.0M376.5 374.1V447.7M377.5 368.3V432.6M378.5 371.3V432.6M379.5 369.1V426.2M380.5 377.8V425.7M381.5 370.5V451.8M382.5 369.0V422.8M383.5 372.9V429.1M384.5 362.6V422.0M385.5 363.5V435.1M386.5 360.6V423.2M387.5 363.5V416.5M388.5 356.8V429.4M389.5 359.1V431.6M390.5 352.9V420.8M391.5 362.9V429.0M392.5 360.9V411.0M393.5 364.2V427.4M394.5 363.4V424.9M395.5 373.8V430.0M396.5 354.4V431.1M397.5 359.3V415.7M398.5 349.7V410.2M399.5 368.2V440.8M400.5 357.9V414.3M401.5 369.3V424.7M402.5 365.4V417.6M403.5 363.9V412.6M404.5 360.2V412.5M405.5 357.9V421.5M406.5 364.8V416.8M407.5 347.8V417.7M408.5 367.2V439.3M409.5 356.6V420.0M410.5 364.2V407.0M411.5 353.8V436.5M412.5 368.6V415.6M413.5 354.6V418.2M414.5 371.2V433.9M415.5 370.5V423.4M416.5 368.3V421.1M417.5 365.4V431.4M418.5 356.2V411.6M419.5 365.3V410.1M420.5 357.6V411.9M421.5 365.7V430.2M422.5 368.6V434.1M423.5 361.1V417.3M424.5 338.3V426.0M425.5 366.6V450.4M426.5 363.7V418.0M427.5 337.2V428.5M428.5 367.3V434.5M429.5 357.8V418.8M430.5 371.8V431.9M431.5 357.0V417.8M432.5 363.8V409.5M433.5 366.3V412.7M434.5 358.2V413.5M435.5 348.9V421.8M436.5 353.4V420.7M437.5 344.2V418.7M438.5 358.4V415.4M439.5 356.7V413.0M440.5 356.5V411.2M441.5 369.8V420.7M442.5 343.3V405.6M443.5 359.8V424.1M444.5 341.6V407.5M445.5 352.3V427.3M446.5 363.9V416.3M447.5 360.9V412.9M448.5 368.7V433.7M449.5 363.7V412.3M450.5 366.8V417.7M451.5 361.6V409.1M452.5 329.6V407.3M453.5 333.7V416.3M454.5 355.0V422.5M455.5 351.0V410.1M456.5 352.9V434.9M457.5 364.8V421.1M458.5 363.4V422.6M459.5 364.7V404.9M460.5 344.3V410.2M461.5 348.3V411.5M462.5 339.0V409.4M463.5 343.5V408.3M464.5 332.1V405.1M465.5 356.2V419.5M466.5 372.2V423.1M467.5 349.9V438.1M468.5 433.3V578.8M469.5 578.8V629.7M470.5 599.0V664.4M471.5 567.5V680.2M472.5 589.4V742.9M473.5 577.0V725.5M474.5 597.7V723.3M475.5 617.9V730.5M476.5 642.7V757.0M477.5 657.0V757.0M478.5 671.4V757.0M479.5 678.0V757.0M480.5 705.6V757.0M481.5 754.0V757.0M482.5 756.2V757.8M483.5 756.2V757.8M484.5 698.2V757.0M485.5 618.1V729.0M486.5 525.6V641.7M487.5 523.4V578.9M488.5 526.4V566.1M489.5 550.4V611.8M490.5 571.7V618.5M491.5 578.7V611.8M492.5 579.9V623.0M493.5 582.7V622.6M494.5 581.1V624.4M495.5 587.4V625.6M496.5 591.2V626.7M497.5 573.1V623.4M498.5 570.0V624.5M499.5 575.0V626.6M500.5 580.1V618.6M501.5 575.7V622.8M502.5 581.8V629.7M503.5 571.0V622.9M504.5 572.1V627.9M505.5 574.9V622.4M506.5 559.2V622.6M507.5 573.7V617.7M508.5 575.4V628.5M509.5 569.9V628.9M510.5 580.5V625.2M511.5 579.3V622.8M512.5 572.0V612.9M513.5 566.3V612.4M514.5 567.6V615.3M515.5 569.1V622.2M516.5 572.1V620.0M517.5 572.8V619.1M518.5 569.7V634.7M519.5 576.9V624.3M520.5 579.3V630.3M521.5 565.1V615.3M522.5 570.6V620.7M523.5 566.8V612.9M524.5 581.6V624.0M525.5 577.2V612.5M526.5 569.3V624.7M527.5 560.0V639.5M528.5 561.0V619.0M529.5 574.4V615.1M530.5 581.5V612.0M531.5 566.9V611.0M532.5 564.1V609.6M533.5 566.0V619.9M534.5 564.6V626.1M535.5 579.6V627.4M536.5 576.0V616.2M537.5 562.3V622.2M538.5 580.1V625.8M539.5 574.8V611.6M540.5 575.4V616.9M541.5 572.1V616.5M542.5 561.4V616.9M543.5 577.7V619.6M544.5 577.4V611.2M545.5 569.3V631.6M546.5 567.1V617.0M547.5 561.3V624.5M548.5 567.2V620.8M549.5 545.4V633.9M550.5 568.1V612.2M551.5 566.4V619.8M552.5 570.4V617.8M553.5 573.9V625.5M554.5 572.0V616.2M555.5 569.8V613.9M556.5 560.3V624.9M557.5 566.7V615.0M558.5 566.2V623.7M559.5 562.5V617.1M560.5 571.4V606.3M561.5 572.2V611.8M562.5 577.1V616.0M563.5 551.6V628.5M564.5 585.0V622.5M565.5 569.0V632.3M566.5 548.0V611.4M567.5 573.9V613.5M568.5 573.8V621.2M569.5 578.7V613.3M570.5 562.3V618.7M571.5 565.8V627.7M572.5 568.8V628.0M573.5 571.2V617.4M574.5 569.1V638.8M575.5 575.3V617.5M576.5 575.9V612.1M577.5 576.4V618.6M578.5 581.1V615.5M579.5 568.6V619.3M580.5 575.8V615.5M581.5 567.7V615.6M582.5 553.3V614.5M583.5 565.8V619.4M584.5 563.9V632.3M585.5 578.9V611.5M586.5 567.0V622.5M587.5 566.4V636.8M588.5 576.3V610.8M589.5 573.4V611.2M590.5 576.6V617.5M591.5 571.5V617.5M592.5 556.5V624.7M593.5 568.3V629.4M594.5 572.4V645.7M595.5 566.1V631.0M596.5 572.7V612.3M597.5 571.6V616.0M598.5 572.4V615.5M599.5 554.9V620.6M600.5 571.9V629.0M601.5 576.7V637.4M602.5 573.8V621.1M603.5 576.2V622.1M604.5 563.5V609.7M605.5 563.3V614.9M606.5 562.3V610.0M607.5 549.1V611.0M608.5 562.0V606.6M609.5 565.7V619.0M610.5 573.4V612.1M611.5 557.4V605.8M612.5 565.5V608.2M613.5 558.7V611.3M614.5 550.9V607.0M615.5 563.1V601.5M616.5 552.7V601.9M617.5 552.2V610.3M618.5 541.9V598.3M619.5 541.5V600.7M620.5 556.1V607.6M621.5 554.1V603.4M622.5 554.4V602.6M623.5 549.5V596.9M624.5 548.7V595.6M625.5 554.5V603.2M626.5 563.9V601.7M627.5 566.6V637.7M628.5 546.2V614.1M629.5 571.0V610.0M630.5 583.9V609.1M631.5 590.8V757.0M632.5 756.2V757.8M633.5 733.5V757.0M634.5 737.8V757.0M635.5 756.2V757.8M636.5 756.2V757.8M637.5 756.2V757.8M638.5 756.2V757.8M639.5 756.2V757.8M640.5 756.2V757.8M641.5 756.2V757.8M642.5 756.2V757.8M643.5 756.2V757.8M644.5 756.2V757.8M645.5 756.2V757.8M646.5 756.2V757.8M647.5 756.2V757.8M648.5 756.2V757.8M649.5 756.2V757.8M650.5 756.2V757.8M651.5 756.2V757.8M652.5 756.2V757.8M653.5 756.2V757.8M654.5 756.2V757.8M655.5 756.2V757.8M656.5 756.2V757.8M657.5 756.2V757.8M658.5 756.2V757.8M659.5 756.2V757.8M660.5 756.2V757.8M661.5 756.2V757.8M662.5 756.2V757.8M663.5 756.2V757.8M664.5 756.2V757.8M665.5 671.4V757.0M666.5 508.0V674.0M667.5 455.9V522.8M668.5 401.3V472.3M669.5 398.2V462.3M670.5 453.4V523.6M671.5 508.7V626.9M672.5 610.3V727.6M673.5 727.6V757.0M674.5 756.2V757.8M675.5 756.2V757.8M676.5 756.2V757.8M677.5 756.2V757.8M678.5 756.2V757.8M679.5 756.2V757.8M680.5 756.2V757.8M681.5 756.2V757.8M682.5 756.2V757.8M683.5 756.2V757.8M684.5 756.2V757.8M685.5 756.2V757.8M686.5 756.2V757.8M687.5 756.2V757.8M688.5 726.9V757.0M689.5 678.4V731.5M690.5 656.5V699.5M691.5 644.6V680.7M692.5 643.0V696.3M693.5 663.7V712.1M694.5 669.9V731.1M695.5 708.0V757.0M696.5 756.1V757.7M697.5 756.2V757.8M698.5 756.2V757.8M699.5 756.2V757.8M700.5 756.2V757.8M701.5 756.2V757.8M702.5 756.2V757.8M703.5 756.2V757.8M704.5 756.2V757.8M705.5 756.2V757.8M706.5 756.2V757.8M707.5 756.2V757.8M708.5 756.2V757.8M709.5 756.2V757.8M710.5 756.2V757.8M711.5 756.2V757.8M712.5 756.2V757.8M713.5 756.2V757.8M714.5 756.2V757.8M715.5 756.2V757.8M716.5 756.2V757.8M717.5 756.2V757.8M718.5 756.2V757.8M719.5 756.2V757.8M720.5 756.2V757.8M721.5 756.2V757.8M722.5 756.2V757.8M723.5 756.2V757.8M724.5 756.2V757.8M725.5 756.2V757.8M726.5 756.2V757.8M727.5 756.2V757.8M728.5 756.2V757.8M729.5 756.2V757.8M730.5 756.2V757.8M731.5 756.2V757.8M732.5 756.2V757.8M733.5 756.2V757.8M734.5 756.2V757.8M735.5 756.2V757.8M736.5 756.2V757.8M737.5 756.2V757.8M738.5 756.2V757.8M739.5 756.2V757.8M740.5 756.2V757.8M741.5 756.2V757.8M742.5 756.2V757.8M743.5 756.2V757.8M744.5 756.2V757.8M745.5 756.2V757.8M746.5 756.2V757.8M747.5 756.2V757.8M748.5 756.2V757.8M749.5 756.2V757.8M750.5 756.2V757.8M751.5 756.2V757.8M752.5 756.2V757.8M753.5 756.2V757.8M754.5 756.2V757.8M755.5 756.2V757.8M756.5 756.2V757.8M757.5 756.2V757.8M758.5 756.2V757.8M759.5 756.2V757.8M760.5 756.2V757.8M761.5 756.2V757.8M762.5 756.2V757.8M763.5 756.2V757.8M764.5 756.2V757.8M765.5 756.2V757.8M766.5 756.2V757.8M767.5 756.2V757.8M768.5 756.2V757.8M769.5 756.2V757.8M770.5 682.2V757.0M771.5 622.9V687.7M772.5 612.3V656.1M773.5 633.7V683.4M774.5 680.7V714.6M775.5 704.5V754.9M776.5 753.5V757.0M777.5 756.2V757.8M778.5 756.2V757.8M779.5 756.2V757.8M780.5 756.2V757.8M781.5 756.2V757.8M782.5 756.2V757.8M783.5 756.2V757.8M784.5 756.2V757.8M785.5 756.2V757.8M786.5 756.2V757.8M787.5 732.5V757.0M788.5 661.3V737.8M789.5 606.0V680.5M790.5 567.4V630.1M791.5 514.3V600.6M792.5 494.0V533.7M793.5 482.2V529.8M794.5 467.5V511.0M795.5 448.2V489.6M796.5 442.9V498.1M797.5 435.3V486.6M798.5 434.2V491.8M799.5 442.3V508.8M800.5 468.7V551.5M801.5 510.3V602.8M802.5 558.3V602.6M803.5 571.4V618.6M804.5 599.6V635.0M805.5 616.4V654.5M806.5 641.5V689.1M807.5 681.4V737.7M808.5 737.4V757.0M809.5 756.2V757.8M810.5 756.2V757.8M811.5 756.2V757.8M812.5 756.2V757.8M813.5 756.2V757.8M814.5 756.2V757.8M815.5 756.2V757.8M816.5 756.2V757.8M817.5 756.2V757.8M818.5 756.2V757.8M819.5 756.2V757.8M820.5 756.2V757.8M821.5 756.2V757.8M822.5 756.2V757.8M823.5 756.2V757.8M824.5 756.2V757.8M825.5 656.8V757.0M826.5 572.2V657.6M827.5 515.0V573.8M828.5 484.8V557.0M829.5 530.7V602.0M830.5 595.6V661.5M831.5 660.2V757.0M832.5 756.2V757.8M833.5 756.2V757.8M834.5 756.2V757.8M835.5 756.2V757.8M836.5 756.2V757.8M837.5 756.2V757.8M838.5 756.2V757.8M839.5 756.2V757.8M840.5 756.2V757.8M841.5 675.7V757.0M842.5 602.0V676.2M843.5 512.1V605.8M844.5 427.5V519.8M845.5 419.2V459.2M846.5 405.1V456.0M847.5 401.1V444.7M848.5 396.4V440.4M849.5 395.5V451.7M850.5 361.5V417.7M851.5 348.8V416.4M852.5 367.8V418.1M853.5 339.8V409.9M854.5 354.7V409.9M855.5 351.8V406.3M856.5 348.7V403.6M857.5 340.1V399.0M858.5 327.9V392.7M859.5 333.0V393.9M860.5 340.7V386.1M861.5 326.5V368.0M862.5 310.4V360.8M863.5 317.3V383.1M864.5 314.7V365.3M865.5 305.2V349.9M866.5 294.6V357.7M867.5 289.8V348.8M868.5 304.7V351.1M869.5 290.6V345.8M870.5 275.9V341.1M871.5 292.8V321.3M872.5 285.7V336.2M873.5 277.5V314.0M874.5 265.7V322.0M875.5 260.6V339.1M876.5 277.2V326.6M877.5 265.9V317.4M878.5 271.6V316.6M879.5 272.5V310.0M880.5 261.8V307.0M881.5 266.6V320.2M882.5 260.2V312.1M883.5 270.5V317.4M884.5 273.5V313.0M885.5 270.3V306.2M886.5 263.2V303.4M887.5 268.0V311.8M888.5 246.9V308.6M889.5 257.5V320.3M890.5 247.0V323.4M891.5 265.6V303.7M892.5 256.2V298.0M893.5 247.7V298.7M894.5 260.6V304.9M895.5 254.4V311.9M896.5 251.4V298.4M897.5 253.9V300.9M898.5 264.0V289.1M899.5 242.2V291.5M900.5 237.0V303.1M901.5 258.8V291.7M902.5 251.0V287.0M903.5 244.1V296.1M904.5 252.1V302.4M905.5 251.8V307.0M906.5 260.9V297.6M907.5 264.0V308.9M908.5 277.8V315.6M909.5 267.2V311.2M910.5 275.7V322.0M911.5 282.5V311.5M912.5 278.1V308.6M913.5 278.4V320.8M914.5 275.3V317.2M915.5 285.2V328.9M916.5 283.7V328.1M917.5 293.6V341.3M918.5 292.3V333.9M919.5 294.4V319.6M920.5 289.9V330.7M921.5 273.5V328.2M922.5 292.1V338.4M923.5 296.6V336.3M924.5 293.7V337.5M925.5 298.7V345.5M926.5 279.0V340.6M927.5 294.7V333.6M928.5 294.7V344.1M929.5 305.5V365.7M930.5 305.4V340.6M931.5 294.0V350.8M932.5 306.4V351.3M933.5 307.7V351.5M934.5 285.0V343.9M935.5 298.8V351.6M936.5 312.4V349.1M937.5 312.7V351.7M938.5 305.1V368.4M939.5 310.5V355.7M940.5 309.9V352.5M941.5 315.5V357.6M942.5 295.2V358.7M943.5 293.8V353.5M944.5 314.0V354.8M945.5 315.8V359.4M946.5 312.5V361.3M947.5 313.1V370.3M948.5 306.4V372.3M949.5 324.4V369.7M950.5 309.5V374.8M951.5 323.7V366.2M952.5 312.7V364.6M953.5 325.1V362.5M954.5 318.6V373.9M955.5 331.1V365.5M956.5 318.6V370.9M957.5 326.2V383.6M958.5 334.3V381.1M959.5 334.0V366.2M960.5 328.8V376.6M961.5 328.6V375.8M962.5 333.0V367.6M963.5 331.2V376.4M964.5 335.3V371.3M965.5 328.7V374.3M966.5 337.1V370.6M967.5 335.7V372.5M968.5 333.9V368.7M969.5 340.8V388.0M970.5 326.7V367.5M971.5 342.3V374.5M972.5 337.1V375.2M973.5 346.2V373.3M974.5 339.6V377.0M975.5 337.9V375.6M976.5 339.7V373.5M977.5 337.1V374.3M978.5 342.0V370.6M979.5 345.2V380.4M980.5 326.2V368.7M981.5 337.5V372.5M982.5 345.3V383.4M983.5 333.2V383.4M984.5 339.2V376.2M985.5 340.5V378.9M986.5 323.3V377.9M987.5 323.3V373.4M988.5 336.4V383.8M989.5 340.5V375.8M990.5 334.9V381.3M991.5 333.4V380.1M992.5 328.1V371.8M993.5 322.6V380.5M994.5 329.0V384.2M995.5 333.5V372.5M996.5 336.3V374.9M997.5 316.6V378.1M998.5 337.6V388.8M999.5 326.6V381.5M1000.5 336.3V376.8M1001.5 343.2V384.8M1002.5 340.6V380.1M1003.5 345.0V379.1M1004.5 332.4V378.8M1005.5 339.4V380.2M1006.5 336.8V372.9M1007.5 335.6V373.4M1008.5 335.6V379.8M1009.5 330.5V391.9M1010.5 335.9V385.6M1011.5 326.6V372.8M1012.5 319.8V378.5M1013.5 326.9V380.1M1014.5 338.7V375.1M1015.5 334.3V368.5M1016.5 321.4V388.9M1017.5 326.5V378.9M1018.5 332.5V394.5M1019.5 340.7V381.0M1020.5 327.2V372.1M1021.5 344.2V379.9M1022.5 342.8V379.3M1023.5 329.0V380.6M1024.5 341.2V380.4M1025.5 339.1V378.8M1026.5 327.4V376.4M1027.5 339.3V380.0M1028.5 332.0V385.6M1029.5 337.5V377.7M1030.5 334.5V366.4M1031.5 332.1V371.2M1032.5 324.3V377.9M1033.5 335.5V379.2M1034.5 330.4V375.2M1035.5 342.8V387.0M1036.5 337.6V378.7M1037.5 336.0V375.5M1038.5 328.9V380.4M1039.5 335.3V372.0M1040.5 331.3V378.6M1041.5 339.0V382.6M1042.5 338.6V374.0M1043.5 331.7V376.2M1044.5 319.7V376.3M1045.5 337.0V370.5M1046.5 319.5V374.5M1047.5 337.3V371.2M1048.5 336.1V387.9M1049.5 330.6V378.5M1050.5 345.8V399.1M1051.5 338.6V374.9M1052.5 332.6V385.3M1053.5 319.8V377.3M1054.5 336.2V376.0M1055.5 336.2V371.2M1056.5 332.1V367.9M1057.5 333.2V377.4M1058.5 335.0V373.6M1059.5 338.8V383.9M1060.5 338.6V380.8M1061.5 331.4V374.3M1062.5 325.2V385.1M1063.5 335.4V376.1M1064.5 332.5V376.7M1065.5 343.8V384.1M1066.5 343.0V386.6M1067.5 342.4V372.4M1068.5 328.4V371.8M1069.5 337.7V374.4M1070.5 329.7V377.2M1071.5 341.2V389.9M1072.5 330.4V376.3M1073.5 337.3V377.4M1074.5 332.0V375.5M1075.5 345.9V382.5M1076.5 344.2V378.4M1077.5 328.7V377.4M1078.5 330.9V390.7M1079.5 339.7V377.9M1080.5 328.5V372.3M1081.5 334.3V375.0M1082.5 336.1V376.5M1083.5 335.2V379.7M1084.5 329.6V375.0M1085.5 331.1V381.1M1086.5 339.3V369.7M1087.5 335.5V391.9M1088.5 318.3V380.7M1089.5 325.3V376.5M1090.5 333.1V372.4M1091.5 336.3V379.8M1092.5 340.2V374.6M1093.5 329.2V374.3M1094.5 341.8V372.1M1095.5 332.6V381.5M1096.5 319.5V378.9M1097.5 345.6V376.9M1098.5 338.5V377.1M1099.5 331.5V378.2M1100.5 340.8V382.1M1101.5 332.1V379.0M1102.5 329.9V378.4M1103.5 345.6V371.5M1104.5 336.1V372.0M1105.5 339.1V370.1M1106.5 338.7V372.7M1107.5 331.2V379.5M1108.5 335.3V370.4M1109.5 330.8V374.8M1110.5 335.3V391.2M1111.5 331.5V371.0M1112.5 335.2V376.6M1113.5 336.9V373.0M1114.5 335.5V377.3M1115.5 329.0V378.8M1116.5 332.4V376.1M1117.5 318.7V382.6M1118.5 342.4V390.3M1119.5 332.9V371.0M1120.5 331.1V377.5M1121.5 336.7V371.3M1122.5 326.9V377.9M1123.5 321.4V365.4M1124.5 334.6V379.5M1125.5 335.2V393.5M1126.5 339.5V379.0M1127.5 342.7V387.0M1128.5 340.9V370.4M1129.5 341.1V385.8M1130.5 332.9V370.2M1131.5 329.8V378.3M1132.5 337.7V388.2M1133.5 343.4V378.9M1134.5 326.4V382.2M1135.5 339.8V379.4M1136.5 312.3V383.5M1137.5 338.3V377.9M1138.5 330.6V379.3M1139.5 330.4V377.7M1140.5 327.8V389.2M1141.5 340.3V380.2M1142.5 337.9V376.1M1143.5 337.9V376.4M1144.5 336.5V376.2M1145.5 338.2V376.6M1146.5 326.3V372.4M1147.5 338.2V398.9M1148.5 323.0V373.3M1149.5 335.3V374.6M1150.5 334.0V381.2M1151.5 332.8V383.4M1152.5 336.2V372.3M1153.5 338.9V375.5M1154.5 340.9V378.5M1155.5 335.9V388.2M1156.5 332.6V391.2M1157.5 339.4V379.1M1158.5 336.5V385.4M1159.5 333.4V370.6M1160.5 337.4V371.8M1161.5 342.1V384.7M1162.5 337.4V375.2M1163.5 326.4V381.0M1164.5 331.3V402.1M1165.5 329.4V376.9M1166.5 326.4V381.0M1167.5 330.2V390.2M1168.5 331.2V371.3M1169.5 338.7V371.9M1170.5 327.2V396.4M1171.5 330.0V395.8M1172.5 329.6V368.7M1173.5 340.1V375.3M1174.5 338.1V398.4M1175.5 336.1V386.0M1176.5 329.7V383.0M1177.5 336.3V374.8M1178.5 335.4V380.7M1179.5 327.6V369.5M1180.5 334.6V380.4M1181.5 338.1V381.4M1182.5 325.5V376.7M1183.5 333.5V367.7M1184.5 342.6V373.0M1185.5 338.3V393.9M1186.5 315.9V376.9M1187.5 334.7V373.4M1188.5 331.3V384.5M1189.5 340.8V372.0M1190.5 336.5V371.7M1191.5 338.8V382.8M1192.5 336.7V379.2M1193.5 336.1V404.9M1194.5 317.4V400.4M1195.5 329.9V393.7M1196.5 335.6V383.5M1197.5 344.2V386.6M1198.5 334.5V369.0M1199.5 332.9V374.1M1200.5 338.6V373.4M1201.5 332.2V376.2M1202.5 340.6V383.6M1203.5 340.3V372.0M1204.5 343.3V385.7M1205.5 343.1V371.8M1206.5 342.9V382.0M1207.5 334.3V382.4M1208.5 333.1V385.8M1209.5 327.2V369.2M1210.5 327.1V371.2M1211.5 333.0V383.3M1212.5 327.2V385.2M1213.5 331.3V369.5M1214.5 341.2V385.1M1215.5 342.0V377.0M1216.5 336.9V369.8M1217.5 338.0V380.1M1218.5 344.1V370.2M1219.5 344.3V373.7M1220.5 339.5V374.0M1221.5 328.5V368.0M1222.5 321.5V382.9M1223.5 336.9V398.1M1224.5 339.1V374.7M1225.5 328.8V381.5M1226.5 339.9V372.6M1227.5 330.6V386.7M1228.5 336.6V380.6M1229.5 337.5V372.7M1230.5 330.8V374.6M1231.5 329.7V384.1M1232.5 332.0V378.9M1233.5 337.1V378.8M1234.5 324.7V378.9M1235.5 330.3V375.4M1236.5 324.8V376.8M1237.5 342.4V378.3M1238.5 338.6V376.4M1239.5 332.8V378.1M1240.5 328.5V377.2M1241.5 331.5V369.4M1242.5 332.3V375.1M1243.5 343.5V378.4M1244.5 332.1V369.5M1245.5 333.6V378.8M1246.5 340.0V379.7M1247.5 338.4V379.2M1248.5 330.7V372.8M1249.5 336.4V383.6M1250.5 333.4V374.5M1251.5 331.4V376.8M1252.5 327.6V379.3M1253.5 339.6V375.0M1254.5 338.5V393.1M1255.5 330.8V378.1M1256.5 339.4V390.0M1257.5 331.0V375.0M1258.5 328.8V373.1M1259.5 325.8V377.8M1260.5 335.7V365.2M1261.5 334.9V374.0M1262.5 339.7V368.7M1263.5 338.7V370.4M1264.5 339.9V384.5M1265.5 342.3V394.7M1266.5 330.2V389.5M1267.5 339.7V378.0M1268.5 335.9V380.9M1269.5 333.2V369.6M1270.5 337.3V377.1M1271.5 329.5V374.5M1272.5 338.2V374.3M1273.5 334.2V373.4M1274.5 340.0V378.0M1275.5 333.4V376.6M1276.5 335.7V368.3M1277.5 343.0V387.3M1278.5 339.8V386.1M1279.5 340.0V386.5M1280.5 324.5V384.4M1281.5 332.8V389.2M1282.5 339.5V376.1M1283.5 337.4V381.5M1284.5 339.3V381.7M1285.5 326.7V389.6M1286.5 328.0V371.9M1287.5 331.4V375.9M1288.5 337.6V370.0M1289.5 337.5V368.3M1290.5 336.1V365.5M1291.5 332.2V375.3M1292.5 335.9V374.2M1293.5 341.7V371.7" stroke="#00ff00" stroke-width="1.25" fill="none"/>
<text class="lm" transform="translate(96.3,367.3) scale(0.783,1)" font-size="13.2" fill="#00cc00">0 V</text>
<path d="M95 289.3H1245" stroke="#fff" stroke-width="1.6"/>
<path d="M95 351.3H1245" stroke="#fff" stroke-width="1.3" stroke-dasharray="3 3.2"/>
<path d="M632 757.6H665M674 757.6H688M697 757.6H770M777 757.6H787M809 757.6H825M832 757.6H841" stroke="#ff4800" stroke-width="1.5"/>
<rect x="1273" y="173" width="18" height="11" fill="#000"/>
<text class="ls" transform="translate(1274.0,182.0) scale(0.928,1)" font-size="11.5" fill="#ff8000">Prs</text>
<rect x="1275" y="205" width="16" height="11" fill="#000"/>
<text class="ls" transform="translate(1276.0,214.0) scale(0.876,1)" font-size="11.5" fill="#9a96fb">Pis</text>
<rect x="1267" y="365" width="24" height="11" fill="#000"/>
<text class="ls" transform="translate(1268.0,374.0) scale(0.930,1)" font-size="11.5" fill="#00ff00">PRK</text>
<rect x="1271" y="429.6" width="20" height="11" fill="#000"/>
<text class="ls" transform="translate(1272.0,438.6) scale(0.971,1)" font-size="11.5" fill="#ffff00">PIK</text>
<path d="M94.5 117.5H1294.5V758.5H94.5Z" stroke="#fff" stroke-width="1" fill="none" shape-rendering="crispEdges"/>
<path d="M1245.3 289.3l5-4.6v9.2z" fill="#ff8000"/><text class="ls" transform="translate(1254.0,295.3) scale(0.952,1)" font-size="17" fill="#ff8000">2</text>
<path d="M1245.3 351.3l5-4.6v9.2z" fill="#fff"/><text class="ls" transform="translate(1255.0,357.3) scale(0.635,1)" font-size="17" fill="#fff">1</text>
<path d="M765.5 119h11.6l-5.8 11z" fill="#ffff00"/><text class="ls" transform="translate(771.3,145.0) scale(1.146,1)" font-size="15" font-weight="bold" text-anchor="middle" fill="#ffff00">T</text>
<path d="M771.3 445.7l6 6-6 6-6-6zM762.5 451.7h17.6" stroke="#ffff00" stroke-width="1.2" fill="none"/>
<path d="M179 757L194.5 741.5L210 757Z" stroke="#8c8c8c" stroke-width="2" fill="none"/>
<text class="ls" transform="translate(94.0,109.4) scale(0.709,1)" font-size="16" font-weight="bold" text-anchor="middle" fill="#fff">Undo</text>
<text class="ls" transform="translate(172.0,109.4) scale(0.854,1)" font-size="16" font-weight="bold" text-anchor="middle" fill="#fff">Delete</text>
<text class="ls" transform="translate(250.0,109.4) scale(0.712,1)" font-size="16" font-weight="bold" text-anchor="middle" fill="#fff">Zoom</text>
<text class="ls" transform="translate(328.0,109.4) scale(0.820,1)" font-size="16" font-weight="bold" text-anchor="middle" fill="#fff">Meter</text>
<text class="ls" transform="translate(406.0,109.4) scale(0.648,1)" font-size="16" font-weight="bold" text-anchor="middle" fill="#fff">FFT</text>
<text class="ls" transform="translate(484.0,109.4) scale(0.693,1)" font-size="16" font-weight="bold" text-anchor="middle" fill="#fff">Search</text>
<text class="ls" transform="translate(562.0,109.4) scale(0.734,1)" font-size="16" font-weight="bold" text-anchor="middle" fill="#fff">Annotation</text>
<text class="ls" transform="translate(744.5,65.4) scale(0.719,1)" font-size="14.8" text-anchor="middle" fill="#000">C1</text>
<path d="M806 67.5h5.2l3.6-15.5h5" fill="none" stroke="#fff" stroke-width="1.7"/>
<text class="ls" transform="translate(781.0,105.0) scale(0.834,1)" font-size="21" text-anchor="middle" fill="#fff" stroke="#fff" stroke-width="0.35">-2 mV</text>
<text class="ls" transform="translate(916.3,66.6) scale(0.869,1)" font-size="21" text-anchor="middle" fill="#fff" stroke="#fff" stroke-width="0.35">Norm</text>
<text class="ls" transform="translate(916.5,105.0) scale(0.818,1)" font-size="21" text-anchor="middle" fill="#fff" stroke="#fff" stroke-width="0.35">2.5 GSa/s</text>
<text class="ls" transform="translate(1052.7,66.6) scale(0.871,1)" font-size="21" text-anchor="middle" fill="#fff" stroke="#fff" stroke-width="0.35">1 µs/</text>
<text class="ls" transform="translate(1052.3,105.0) scale(0.826,1)" font-size="21" text-anchor="middle" fill="#fff" stroke="#fff" stroke-width="0.35">-5.77 µs</text>
<text class="ls" transform="translate(1159.8,66.2) scale(0.718,1)" font-size="18.5" font-weight="bold" fill="#fff">Trig?: 9</text>
<text class="ls" transform="translate(1208.3,66.2) scale(0.839,1)" font-size="15" font-weight="bold" fill="#fff">s</text>
<text class="ls" transform="translate(1188.0,104.7) scale(0.824,1)" font-size="21" text-anchor="middle" fill="#fff" stroke="#fff" stroke-width="0.35">Sample</text>
<text class="ls" transform="translate(1329.6,55.5) scale(0.849,1)" font-size="14.5" text-anchor="end" fill="#fff">2024-08-01</text>
<text class="ls" transform="translate(1329.9,70.6) scale(0.827,1)" font-size="14.5" text-anchor="end" fill="#fff">15:08</text>
<g fill="#00ff00"><rect x="1308.2" y="87.2" width="7.8" height="5.8"/><rect x="1296" y="96.2" width="32.2" height="2"/><rect x="1311.1" y="92" width="2" height="5"/><rect x="1300" y="101" width="8" height="6.2"/><rect x="1316" y="101" width="8" height="6.2"/><rect x="1303" y="97" width="2" height="5"/><rect x="1319" y="97" width="2" height="5"/></g>
<path d="M702.87 77.72L702.87 80.68L700.62 80.69L699.86 82.54L701.44 84.15L699.35 86.24L697.74 84.66L695.89 85.42L695.88 87.67L692.92 87.67L692.91 85.42L691.06 84.66L689.45 86.24L687.36 84.15L688.94 82.54L688.18 80.69L685.93 80.68L685.93 77.72L688.18 77.71L688.94 75.86L687.36 74.25L689.45 72.16L691.06 73.74L692.91 72.98L692.92 70.73L695.88 70.73L695.89 72.98L697.74 73.74L699.35 72.16L701.44 74.25L699.86 75.86L700.62 77.71ZM697.6999999999999 79.2A3.3 3.3 0 1 0 691.1 79.2A3.3 3.3 0 1 0 697.6999999999999 79.2Z" fill="#fff" fill-rule="evenodd"/>
<path d="M690.5 109.3h7.6l-3.8 3.6z" fill="#fff"/>
<path d="M81.5 62.5L92.5 53.5V59.5C101 60.5 107 67 107 77.5C107 79.5 106.5 81 106 82.5L102.8 81.3C103.2 80 103.3 79 103.3 77.5C103.3 70 99 65.8 92.5 65.5V71.5Z" fill="#fff"/>
<g fill="#fff"><rect x="159.7" y="52.5" width="25.5" height="2"/><rect x="168" y="50.3" width="9" height="2.5"/><path d="M162 56.5h21.3v25h-21.3zM164.6 59.5v19h2v-19zM169.3 59.5v19h2v-19zM174 59.5v19h2v-19zM178.7 59.5v19h2v-19z" fill-rule="evenodd"/></g>
<circle cx="245.5" cy="62.5" r="11" fill="none" stroke="#fff" stroke-width="2.3"/><path d="M252.5 72l3.3-3.3 10.3 10-3.5 3.5z" fill="#fff"/><path d="M240 62.5h11M245.5 57v11" stroke="#1090f0" stroke-width="2.6"/>
<path d="M316.8 50h22.4v32h-22.4zM320 53.5v6.2h16v-6.2z" fill="#fff" fill-rule="evenodd"/><circle cx="328" cy="71" r="8.2" fill="#2a343c"/><path d="M322 76.5L334 65.5" stroke="#fff" stroke-width="2.8"/>
<path d="M390 75.5h32M392.6 76.5v-21M396.7 76.5v-16M400.8 76.5v-12M405 76.5v-9M409 76.5v-8M413 76.5v-7M417 76.5v-6.5M420.2 76.5v-6.5" stroke="#fff" stroke-width="1.4" fill="none"/>
<circle cx="479.5" cy="63" r="11" fill="none" stroke="#fff" stroke-width="2.3"/><path d="M486.5 72.5l3.3-3.3 10.5 10-3.6 3.6z" fill="#fff"/>
<path d="M549.3 69.3L568.7 50.4L577.6 58.7L558.7 76.8Z M554.6 68.2L568.6 54.9L570.4 56.7L556.4 70Z" fill="#fff" fill-rule="evenodd"/><path d="M549.3 69.3L558.7 76.8L546 82Z M551.6 72.2L556.2 75.9L549.6 78.3Z" fill="#fff" fill-rule="evenodd"/>
<path d="M55.5 172.3H83.5L93.5 181.5L83.5 190.7H55.5Z" fill="#000" stroke="#9a5208" stroke-width="1.3"/>
<text class="ls" transform="translate(69.0,187.1) scale(0.733,1)" font-size="16" text-anchor="middle" fill="#a85a0a">C3</text>
<path d="M55.5 204.3H83.5L93.5 213.5L83.5 222.7H55.5Z" fill="#000" stroke="#4c4a86" stroke-width="1.3"/>
<text class="ls" transform="translate(69.0,219.1) scale(0.733,1)" font-size="16" text-anchor="middle" fill="#5c5a9e">C4</text>
<path d="M55.5 365.3H83.5L93.5 374.5L83.5 383.7H55.5Z" fill="#00ff00" stroke="#00ff00" stroke-width="1.3"/>
<text class="ls" transform="translate(69.0,380.1) scale(0.733,1)" font-size="16" text-anchor="middle" fill="#000">C2</text>
<path d="M55.5 429.40000000000003H83.5L93.5 438.6L83.5 447.8H55.5Z" fill="#000" stroke="#8f8a10" stroke-width="1.3"/>
<text class="ls" transform="translate(69.0,444.2) scale(0.733,1)" font-size="16" text-anchor="middle" fill="#a8a214">C1</text>
<path d="M1295.5 451.5L1305 442.3H1332.8V460.8H1305Z" fill="#ffff00"/><text class="ls" transform="translate(1317.5,457.0) scale(0.944,1)" font-size="13" font-weight="bold" text-anchor="middle" fill="#000">TL</text>
<text class="ls" transform="translate(69.5,786.5) scale(0.730,1)" font-size="15" text-anchor="middle" fill="#000">C2</text>
<text class="ls" transform="translate(84.0,789.0) scale(0.575,1)" font-size="24" fill="#fff" stroke="#fff" stroke-width="0.35">[ ]</text>
<text class="ls" transform="translate(100.6,787.8) scale(0.848,1)" font-size="21.5" fill="#fff" stroke="#fff" stroke-width="0.35">Mean: clipping-</text>
<text class="ls" transform="translate(715.5,785.5) scale(0.678,1)" font-size="15" text-anchor="middle" fill="#000">C1</text>
<text class="ls" transform="translate(733.0,785.8) scale(0.855,1)" font-size="16.7" font-weight="bold" fill="#fff">V1: 13.575 mV</text>
<text class="ls" transform="translate(881.4,785.8) scale(0.851,1)" font-size="16.7" font-weight="bold" fill="#fff">V2: 23.145 mV</text>
<text class="ls" transform="translate(1028.6,785.8) scale(0.856,1)" font-size="16.7" font-weight="bold" fill="#fff">ΔV: 9.5707 mV</text>
<text class="ls" transform="translate(75.5,827.0) scale(0.704,1)" font-size="20" text-anchor="middle" fill="#000" stroke="#000" stroke-width="0.3">C1</text>
<text class="ls" transform="translate(128.5,829.6) scale(0.800,1)" font-size="24.5" fill="#fff" stroke="#fff" stroke-width="0.3">10</text>
<text class="ls" transform="translate(155.8,829.6) scale(0.860,1)" font-size="18.5" fill="#fff" stroke="#fff" stroke-width="0.35">mV/</text>
<text class="ls" transform="translate(243.0,818.0) scale(1.012,1)" font-size="18.5" text-anchor="middle" fill="#fff">Ω</text>
<text class="ls" transform="translate(251.6,838.0) scale(0.664,1)" font-size="13" text-anchor="end" fill="#fff">1:1</text>
<text class="ls" transform="translate(276.5,827.0) scale(0.704,1)" font-size="20" text-anchor="middle" fill="#000" stroke="#000" stroke-width="0.3">C2</text>
<text class="ls" transform="translate(319.0,829.6) scale(0.800,1)" font-size="24.5" fill="#fff" stroke="#fff" stroke-width="0.3">500</text>
<text class="ls" transform="translate(357.2,829.6) scale(0.860,1)" font-size="18.5" fill="#fff" stroke="#fff" stroke-width="0.35">µV/</text>
<text class="ls" transform="translate(444.0,818.0) scale(1.012,1)" font-size="18.5" text-anchor="middle" fill="#fff">Ω</text>
<text class="ls" transform="translate(452.6,838.0) scale(0.664,1)" font-size="13" text-anchor="end" fill="#fff">1:1</text>
<text class="ls" transform="translate(477.5,827.0) scale(0.704,1)" font-size="20" text-anchor="middle" fill="#0c0606" stroke="#0c0606" stroke-width="0.3">C3</text>
<text class="ls" transform="translate(530.5,829.6) scale(0.800,1)" font-size="24.5" fill="#fff" stroke="#fff" stroke-width="0.3">20</text>
<text class="ls" transform="translate(557.8,829.6) scale(0.860,1)" font-size="18.5" fill="#fff" stroke="#fff" stroke-width="0.35">mV/</text>
<text class="ls" transform="translate(645.0,818.0) scale(1.012,1)" font-size="18.5" text-anchor="middle" fill="#fff">Ω</text>
<text class="ls" transform="translate(653.6,838.0) scale(0.664,1)" font-size="13" text-anchor="end" fill="#fff">1:1</text>
<text class="ls" transform="translate(678.5,827.0) scale(0.704,1)" font-size="20" text-anchor="middle" fill="#0c0606" stroke="#0c0606" stroke-width="0.3">C4</text>
<text class="ls" transform="translate(731.5,829.6) scale(0.800,1)" font-size="24.5" fill="#fff" stroke="#fff" stroke-width="0.3">50</text>
<text class="ls" transform="translate(758.8,829.6) scale(0.860,1)" font-size="18.5" fill="#fff" stroke="#fff" stroke-width="0.35">mV/</text>
<text class="ls" transform="translate(846.0,818.0) scale(1.012,1)" font-size="18.5" text-anchor="middle" fill="#fff">Ω</text>
<text class="ls" transform="translate(854.6,838.0) scale(0.664,1)" font-size="13" text-anchor="end" fill="#fff">1:1</text>
<path d="M1259 799L1295.8 764.3H1299.6L1335 798.5V800H1259Z" fill="#2a343c" stroke="#000" stroke-width="1"/><rect x="1259" y="799" width="76" height="3" fill="#2a343c"/>
<path d="M1297.3 767.1L1329.7 799.3L1297.3 830L1265.3 799.3Z" fill="none" stroke="#ff8000" stroke-width="1.7"/>
<path d="M1297.3 775L1321.8 799.3L1297.3 823L1273 799.3Z" fill="none" stroke="#1e9bff" stroke-width="4.7"/>
<path d="M1307.5 787C1299 793 1300 799 1296 802C1292 805 1289 805 1286 808" fill="none" stroke="#1e9bff" stroke-width="3.1"/>
<text class="ls" transform="translate(1290.6,799.4) scale(0.860,1)" font-size="14" font-weight="bold" text-anchor="middle" fill="#1e9bff">R</text><text class="ls" transform="translate(1303.3,811.0) scale(0.950,1)" font-size="14" font-weight="bold" text-anchor="middle" fill="#1e9bff">S</text>
<text class="ls" transform="translate(1297.1,838.9) scale(0.874,1)" font-size="17" font-weight="bold" text-anchor="middle" fill="#fff">Menu</text>
<text class="ls" transform="translate(1452.5,48.7) scale(0.818,1)" font-size="21" font-weight="bold" fill="#fff">Horizontal</text>
<text class="ls" transform="translate(1787.0,47.1) scale(0.843,1)" font-size="21" font-weight="bold" fill="#fff">Trigger</text>
<text class="ls" transform="translate(1452.3,377.4) scale(0.843,1)" font-size="21" font-weight="bold" fill="#fff">Vertical</text>
<text class="ls" transform="translate(1787.0,322.9) scale(0.811,1)" font-size="21" font-weight="bold" fill="#fff">Action</text>
<text class="ls" transform="translate(1787.0,520.4) scale(0.805,1)" font-size="21" font-weight="bold" fill="#fff">Analysis</text>
<text class="ls" transform="translate(1641.0,62.5) scale(0.814,1)" font-size="19" font-weight="bold" text-anchor="middle" fill="#fff">Position</text>
<text class="ls" transform="translate(1641.0,221.4) scale(0.816,1)" font-size="19" font-weight="bold" text-anchor="middle" fill="#fff">Scale</text>
<text class="ls" transform="translate(1641.0,627.6) scale(0.826,1)" font-size="19" font-weight="bold" text-anchor="middle" fill="#fff">Scale</text>
<text class="ls" transform="translate(1921.5,121.0) scale(0.795,1)" font-size="19" font-weight="bold" text-anchor="middle" fill="#fff">Levels</text>
<text class="ls" transform="translate(1486.2,100.7) scale(0.779,1)" font-size="20" font-weight="bold" text-anchor="middle" fill="#000">Zoom</text>
<text class="ls" transform="translate(1486.2,191.6) scale(0.808,1)" font-size="20" font-weight="bold" text-anchor="middle" fill="#000">Hori-</text>
<text class="ls" transform="translate(1486.2,211.3) scale(0.779,1)" font-size="20" font-weight="bold" text-anchor="middle" fill="#000">zontal</text>
<text class="ls" transform="translate(1486.2,291.0) scale(0.812,1)" font-size="20" font-weight="bold" text-anchor="middle" fill="#000">Acqui-</text>
<text class="ls" transform="translate(1486.2,310.2) scale(0.795,1)" font-size="20" font-weight="bold" text-anchor="middle" fill="#000">sition</text>
<text class="ls" transform="translate(1486.2,429.5) scale(0.757,1)" font-size="20" font-weight="bold" text-anchor="middle" fill="#000">Ch1</text>
<text class="ls" transform="translate(1486.2,532.2) scale(0.768,1)" font-size="20" font-weight="bold" text-anchor="middle" fill="#000">Ch2</text>
<text class="ls" transform="translate(1486.2,634.3) scale(0.768,1)" font-size="20" font-weight="bold" text-anchor="middle" fill="#000">Ch3</text>
<text class="ls" transform="translate(1486.2,737.0) scale(0.781,1)" font-size="20" font-weight="bold" text-anchor="middle" fill="#000">Ch4</text>
<text class="ls" transform="translate(1486.2,838.2) scale(0.758,1)" font-size="20" font-weight="bold" text-anchor="middle" fill="#000">Logic</text>
<text class="ls" transform="translate(1591.8,838.9) scale(0.773,1)" font-size="20" font-weight="bold" text-anchor="middle" fill="#000">Ref</text>
<text class="ls" transform="translate(1696.8,838.9) scale(0.857,1)" font-size="20" font-weight="bold" text-anchor="middle" fill="#000">Math</text>
<text class="ls" transform="translate(1816.0,99.3) scale(0.811,1)" font-size="20" font-weight="bold" text-anchor="middle" fill="#000">Trigger</text>
<text class="ls" transform="translate(1816.0,174.0) scale(0.779,1)" font-size="20" font-weight="bold" text-anchor="middle" fill="#000">Source</text>
<text class="ls" transform="translate(1816.0,237.2) scale(0.791,1)" font-size="20" font-weight="bold" text-anchor="middle" fill="#000">Auto</text>
<text class="ls" transform="translate(1816.0,257.4) scale(0.793,1)" font-size="20" font-weight="bold" text-anchor="middle" fill="#000">Norm</text>
<text class="ls" transform="translate(2026.5,89.2) scale(0.772,1)" font-size="20" font-weight="bold" text-anchor="middle" fill="#000">Run</text>
<text class="ls" transform="translate(2026.5,109.4) scale(0.765,1)" font-size="20" font-weight="bold" text-anchor="middle" fill="#000">Stop</text>
<text class="ls" transform="translate(2026.5,172.6) scale(0.800,1)" font-size="20" font-weight="bold" text-anchor="middle" fill="#000">Single</text>
<text class="ls" transform="translate(2026.5,235.5) scale(0.734,1)" font-size="18.5" font-weight="bold" text-anchor="middle" fill="#000">Force</text>
<text class="ls" transform="translate(2026.5,255.7) scale(0.781,1)" font-size="18.5" font-weight="bold" text-anchor="middle" fill="#000">Trigger</text>
<text class="ls" transform="translate(1921.3,364.6) scale(0.764,1)" font-size="20" font-weight="bold" text-anchor="middle" fill="#000">Save</text>
<text class="ls" transform="translate(1921.3,385.5) scale(0.747,1)" font-size="20" font-weight="bold" text-anchor="middle" fill="#000">Load</text>
<text class="ls" transform="translate(2026.5,375.3) scale(0.791,1)" font-size="20" font-weight="bold" text-anchor="middle" fill="#000">Autoset</text>
<text class="ls" transform="translate(1816.0,436.6) scale(0.708,1)" font-size="20" font-weight="bold" text-anchor="middle" fill="#000">Touch</text>
<text class="ls" transform="translate(1816.0,460.2) scale(0.671,1)" font-size="20" font-weight="bold" text-anchor="middle" fill="#000">Lock</text>
<text class="ls" transform="translate(1921.3,438.2) scale(0.780,1)" font-size="20" font-weight="bold" text-anchor="middle" fill="#000">Clear</text>
<text class="ls" transform="translate(1921.3,458.4) scale(0.783,1)" font-size="20" font-weight="bold" text-anchor="middle" fill="#000">Screen</text>
<text class="ls" transform="translate(2026.5,448.5) scale(0.703,1)" font-size="20" font-weight="bold" text-anchor="middle" fill="#000">Preset</text>
<text class="ls" transform="translate(1816.0,692.5) scale(0.770,1)" font-size="20" font-weight="bold" text-anchor="middle" fill="#000">Cursor</text>
<text class="ls" transform="translate(1921.3,692.5) scale(0.834,1)" font-size="20" font-weight="bold" text-anchor="middle" fill="#000">Meas</text>
<text class="ls" transform="translate(1816.0,754.1) scale(0.786,1)" font-size="20" font-weight="bold" text-anchor="middle" fill="#000">Quick</text>
<text class="ls" transform="translate(1816.0,777.3) scale(0.828,1)" font-size="20" font-weight="bold" text-anchor="middle" fill="#000">Meas</text>
<text class="ls" transform="translate(1921.3,765.9) scale(0.783,1)" font-size="20" font-weight="bold" text-anchor="middle" fill="#000">Search</text>
<text class="ls" transform="translate(2026.5,765.9) scale(0.707,1)" font-size="20" font-weight="bold" text-anchor="middle" fill="#000">FFT</text>
<text class="ls" transform="translate(1816.0,839.3) scale(0.742,1)" font-size="19" font-weight="bold" text-anchor="middle" fill="#000">Protocol</text>
<text class="ls" transform="translate(1921.3,839.3) scale(0.735,1)" font-size="20" font-weight="bold" text-anchor="middle" fill="#000">Gen</text>
<text class="ls" transform="translate(1921.2,80.3) scale(0.905,1)" font-size="14" font-weight="bold" text-anchor="middle" fill="#000">Trig'd</text>
<path d="M1799 357.5h5.5l2.8-3.8h17.4l2.8 3.8h5.5a3 3 0 0 1 3 3v18a3 3 0 0 1-3 3h-34a3 3 0 0 1-3-3v-18a3 3 0 0 1 3-3z" fill="#050507"/><circle cx="1816.2" cy="368" r="7.6" fill="none" stroke="#b4b5c0" stroke-width="1.8"/>
<path d="M2037.9 685.3L2042.1 685.3M2036.4 690.9L2040.0 693.0M2032.2 695.1L2034.3 698.7M2026.6 696.6L2026.6 700.8M2020.9 695.1L2018.8 698.7M2016.8 690.9L2013.2 693.0M2015.3 685.3L2011.1 685.3M2016.8 679.6L2013.2 677.5M2020.9 675.5L2018.8 671.9M2026.6 674.0L2026.6 669.8M2032.2 675.5L2034.3 671.9M2036.4 679.6L2040.0 677.5" stroke="#000" stroke-width="1.5"/><circle cx="2026.6" cy="685.3" r="7.4" fill="none" stroke="#000" stroke-width="1.7"/><path d="M2032.1 679.8A7.8 7.8 0 0 1 2021.1 690.8Z" fill="#000"/>
<rect x="2003.3" y="817.3" width="11.6" height="11.2" fill="#000"/><rect x="2020.9" y="817.3" width="11.6" height="11.2" fill="#000"/><rect x="2038.5" y="817.3" width="11.6" height="11.2" fill="#000"/><rect x="2003.3" y="834.9" width="11.6" height="11.2" fill="#000"/><rect x="2020.9" y="834.9" width="11.6" height="11.2" fill="#000"/><rect x="2038.5" y="834.9" width="11.6" height="11.2" fill="#000"/>
<path d="M1826.5 584.5A12 12 0 1 0 1828.3 593.5" fill="none" stroke="#f2f2f4" stroke-width="3"/><path d="M1821.5 577L1833 583.5L1822.5 589Z" fill="#f2f2f4"/>
<circle cx="1651.2" cy="74.9" r="2.2" fill="#56575e"/><circle cx="1674.2" cy="100.4" r="2.2" fill="#56575e"/><circle cx="1663.6" cy="133.0" r="2.2" fill="#56575e"/><circle cx="1630.0" cy="140.1" r="2.2" fill="#56575e"/><circle cx="1607.0" cy="114.6" r="2.2" fill="#56575e"/><circle cx="1617.6" cy="82.0" r="2.2" fill="#56575e"/>
<circle cx="1653.9" cy="243.1" r="2.2" fill="#56575e"/><circle cx="1682.9" cy="275.2" r="2.2" fill="#56575e"/><circle cx="1669.5" cy="316.3" r="2.2" fill="#56575e"/><circle cx="1627.3" cy="325.3" r="2.2" fill="#56575e"/><circle cx="1598.3" cy="293.2" r="2.2" fill="#56575e"/><circle cx="1611.7" cy="252.1" r="2.2" fill="#56575e"/>
<circle cx="1932.1" cy="133.5" r="2.2" fill="#56575e"/><circle cx="1955.1" cy="159.0" r="2.2" fill="#56575e"/><circle cx="1944.5" cy="191.6" r="2.2" fill="#56575e"/><circle cx="1910.9" cy="198.7" r="2.2" fill="#56575e"/><circle cx="1887.9" cy="173.2" r="2.2" fill="#56575e"/><circle cx="1898.5" cy="140.6" r="2.2" fill="#56575e"/>
<circle cx="1934.6" cy="548.6" r="2.2" fill="#56575e"/><circle cx="1963.6" cy="580.7" r="2.2" fill="#56575e"/><circle cx="1950.2" cy="621.8" r="2.2" fill="#56575e"/><circle cx="1908.0" cy="630.8" r="2.2" fill="#56575e"/><circle cx="1879.0" cy="598.7" r="2.2" fill="#56575e"/><circle cx="1892.4" cy="557.6" r="2.2" fill="#56575e"/>
<circle cx="1651.5" cy="439.1" r="2.2" fill="#56575e"/><circle cx="1674.7" cy="465.0" r="2.2" fill="#56575e"/><circle cx="1664.0" cy="498.1" r="2.2" fill="#56575e"/><circle cx="1629.9" cy="505.3" r="2.2" fill="#56575e"/><circle cx="1606.7" cy="479.4" r="2.2" fill="#56575e"/><circle cx="1617.4" cy="446.3" r="2.2" fill="#56575e"/>
<circle cx="1654.0" cy="661.0" r="2.2" fill="#56575e"/><circle cx="1682.7" cy="692.8" r="2.2" fill="#56575e"/><circle cx="1669.4" cy="733.5" r="2.2" fill="#56575e"/><circle cx="1627.6" cy="742.4" r="2.2" fill="#56575e"/><circle cx="1598.9" cy="710.6" r="2.2" fill="#56575e"/><circle cx="1612.2" cy="669.9" r="2.2" fill="#56575e"/>
<path d="M1601.3 80.5L1609.0 74.0L1609.0 87.0Z" fill="#f2f4f8"/><path d="M1680.2 80.5L1672.7 74.0L1672.7 87.0Z" fill="#f2f4f8"/>
<path d="M1589.0 239.0L1596.6 245.7L1589.0 252.4Z" fill="#f2f4f8"/><path d="M1606.0 239.0L1598.4 245.7L1606.0 252.4Z" fill="#f2f4f8"/>
<path d="M1676.0 245.7L1682.8 239.0L1682.8 252.4Z" fill="#f2f4f8"/><path d="M1692.0 245.7L1685.2 239.0L1685.2 252.4Z" fill="#f2f4f8"/>
<path d="M1872.7 135.3L1886.2 135.3L1879.5 142.0Z" fill="#f2f4f8"/><path d="M1955.9 142.0L1969.3 142.0L1962.6 135.3Z" fill="#f2f4f8"/>
<path d="M1583.0 428.2L1597.9 428.2L1590.5 436.0Z" fill="#f2f4f8"/><path d="M1684.0 436.3L1698.2 436.3L1691.1 428.8Z" fill="#f2f4f8"/>
<path d="M1582.7 637.0L1596.8 637.0L1589.8 644.3Z" fill="#f2f4f8"/><path d="M1582.7 653.2L1596.8 653.2L1589.8 645.9Z" fill="#f2f4f8"/>
<path d="M1685.0 644.3L1699.1 644.3L1692.0 637.0Z" fill="#f2f4f8"/><path d="M1685.0 645.9L1699.1 645.9L1692.0 653.2Z" fill="#f2f4f8"/>
<path d="M1603.1999999999998 135.8h5.2v2.6h4.2l-6.8 4.6l-6.8-4.6h4.2zM1602.1999999999998 144.0h7.2l2.4 5.2h2.3v2h-16.6v-2h2.3z" fill="#f2f4f8"/>
<path d="M1594.6 320.8h5.2v2.6h4.2l-6.8 4.6l-6.8-4.6h4.2zM1593.6 329.0h7.2l2.4 5.2h2.3v2h-16.6v-2h2.3z" fill="#f2f4f8"/>
<path d="M1877.3999999999999 194.6h5.2v2.6h4.2l-6.8 4.6l-6.8-4.6h4.2zM1876.3999999999999 202.79999999999998h7.2l2.4 5.2h2.3v2h-16.6v-2h2.3z" fill="#f2f4f8"/>
<path d="M1592.8 510.8h5.2v2.6h4.2l-6.8 4.6l-6.8-4.6h4.2zM1591.8 519.0h7.2l2.4 5.2h2.3v2h-16.6v-2h2.3z" fill="#f2f4f8"/>
<path d="M1584.8 748h5.2v2.6h4.2l-6.8 4.6l-6.8-4.6h4.2zM1583.8 756.2h7.2l2.4 5.2h2.3v2h-16.6v-2h2.3z" fill="#f2f4f8"/>
<path d="M1875.3999999999999 626.3h5.2v2.6h4.2l-6.8 4.6l-6.8-4.6h4.2zM1874.3999999999999 634.5h7.2l2.4 5.2h2.3v2h-16.6v-2h2.3z" fill="#f2f4f8"/>
<text class="ls" transform="translate(1670.3,136.6) scale(0.820,1)" font-size="11.8" font-weight="bold" fill="#f2f4f8">Push</text>
<text class="ls" transform="translate(1670.3,151.3) scale(0.795,1)" font-size="11.8" font-weight="bold" fill="#f2f4f8">to Zero</text>
<text class="ls" transform="translate(1682.6,320.9) scale(0.820,1)" font-size="11.8" font-weight="bold" fill="#f2f4f8">Coarse</text>
<text class="ls" transform="translate(1682.6,335.3) scale(0.820,1)" font-size="11.8" font-weight="bold" fill="#f2f4f8">Fine</text>
<text class="ls" transform="translate(1979.4,195.2) scale(0.820,1)" font-size="11.8" font-weight="bold" text-anchor="end" fill="#f2f4f8">Push</text>
<text class="ls" transform="translate(1979.4,209.3) scale(0.845,1)" font-size="11.8" font-weight="bold" text-anchor="end" fill="#f2f4f8">for 50%</text>
<text class="ls" transform="translate(1689.5,511.8) scale(0.783,1)" font-size="11.8" font-weight="bold" fill="#f2f4f8">Push</text>
<text class="ls" transform="translate(1689.5,525.8) scale(0.783,1)" font-size="11.8" font-weight="bold" fill="#f2f4f8">to Zero</text>
<text class="ls" transform="translate(1695.4,749.0) scale(0.820,1)" font-size="11.8" font-weight="bold" fill="#f2f4f8">Coarse</text>
<text class="ls" transform="translate(1695.4,763.2) scale(0.820,1)" font-size="11.8" font-weight="bold" fill="#f2f4f8">Fine</text>
<text class="ls" transform="translate(1992.9,627.1) scale(0.820,1)" font-size="11.8" font-weight="bold" text-anchor="end" fill="#f2f4f8">Push</text>
<text class="ls" transform="translate(1992.9,641.3) scale(0.813,1)" font-size="11.8" font-weight="bold" text-anchor="end" fill="#f2f4f8">to Select</text>
</svg>
</body></html>
